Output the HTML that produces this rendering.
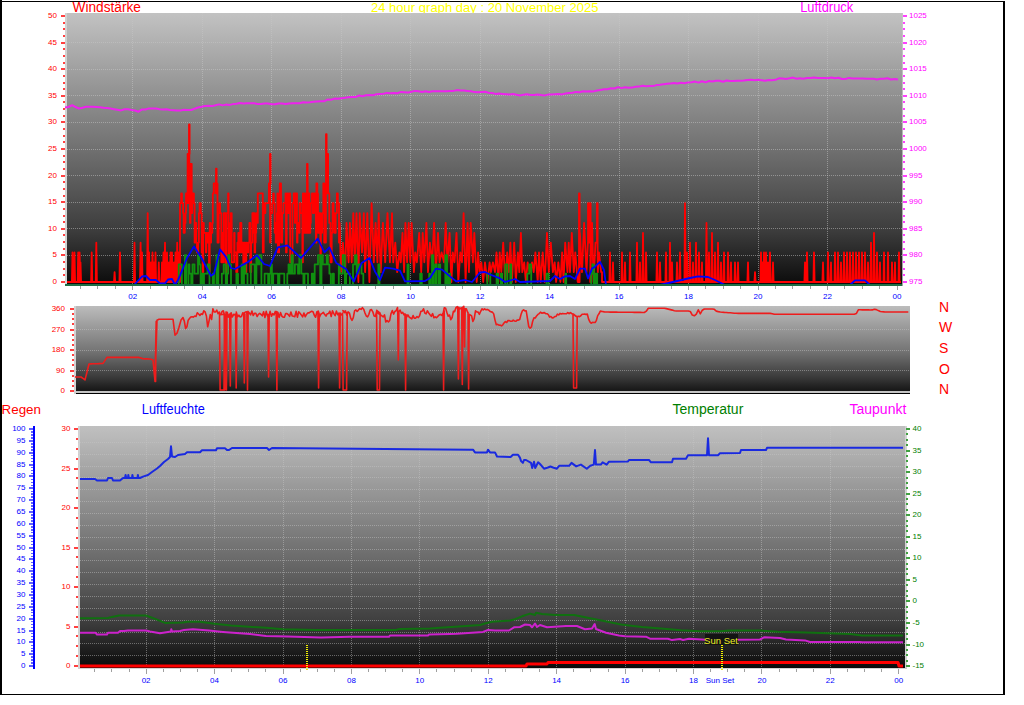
<!DOCTYPE html>
<html><head><meta charset="utf-8"><style>
html,body{margin:0;padding:0;background:#fff;width:1024px;height:705px;overflow:hidden}
svg{display:block}
text{font-family:"Liberation Sans", sans-serif}
</style></head><body>
<svg width="1024" height="705" viewBox="0 0 1024 705" shape-rendering="crispEdges">
<rect x="0" y="0" width="1024" height="705" fill="#fff"/>
<defs>
<linearGradient id="g1" x1="0" y1="0" x2="0" y2="1">
 <stop offset="0" stop-color="#c2c2c2"/><stop offset="0.5" stop-color="#707070"/><stop offset="0.8" stop-color="#3c3c3c"/><stop offset="1" stop-color="#0a0a0a"/>
</linearGradient>
<linearGradient id="g2" x1="0" y1="0" x2="0" y2="1">
 <stop offset="0" stop-color="#bcbcbc"/><stop offset="0.5" stop-color="#767676"/><stop offset="0.8" stop-color="#3c3c3c"/><stop offset="1" stop-color="#0e0e0e"/>
</linearGradient>
<linearGradient id="g3" x1="0" y1="0" x2="0" y2="1">
 <stop offset="0" stop-color="#c0c0c0"/><stop offset="0.5" stop-color="#737373"/><stop offset="0.8" stop-color="#404040"/><stop offset="1" stop-color="#0a0a0a"/>
</linearGradient>
<clipPath id="ctop"><rect x="0" y="13" width="1024" height="300"/></clipPath>
<clipPath id="cmid"><rect x="0" y="306" width="1024" height="100"/></clipPath>
<clipPath id="cbot"><rect x="0" y="426" width="1024" height="260"/></clipPath>
</defs>
<rect x="0" y="1" width="1005" height="1" fill="#000"/>
<rect x="0" y="0" width="2" height="695" fill="#000"/>
<rect x="1003" y="1" width="2" height="694" fill="#000"/>
<rect x="0" y="694" width="1005" height="1" fill="#000"/>
<text x="72.5" y="12" fill="#ff0000" font-size="14" text-anchor="start" textLength="68.5" lengthAdjust="spacingAndGlyphs">Windstärke</text>
<text x="371" y="12" fill="#ffff00" font-size="13" text-anchor="start" textLength="227.5" lengthAdjust="spacingAndGlyphs">24 hour graph day : 20 November 2025</text>
<text x="800.2" y="12.3" fill="#ff00ff" font-size="14" text-anchor="start" textLength="53" lengthAdjust="spacingAndGlyphs">Luftdruck</text>
<text x="1.5" y="414" fill="#ff0000" font-size="13.5" text-anchor="start" textLength="39.5" lengthAdjust="spacingAndGlyphs">Regen</text>
<text x="141.8" y="414" fill="#0000ff" font-size="14" text-anchor="start" textLength="63" lengthAdjust="spacingAndGlyphs">Luftfeuchte</text>
<text x="672.5" y="414" fill="#008000" font-size="14" text-anchor="start" >Temperatur</text>
<text x="849.5" y="414" fill="#ff00ff" font-size="14" text-anchor="start" >Taupunkt</text>
<rect x="65" y="13" width="838" height="273" fill="url(#g1)"/>
<rect x="65" y="13" width="2" height="273" fill="#d2d2d2"/>
<line x1="65" y1="255.4" x2="903" y2="255.4" stroke="#c8c8c8" stroke-width="1" stroke-dasharray="1 1" opacity="0.5"/>
<line x1="65" y1="228.8" x2="903" y2="228.8" stroke="#c8c8c8" stroke-width="1" stroke-dasharray="1 1" opacity="0.5"/>
<line x1="65" y1="202.2" x2="903" y2="202.2" stroke="#c8c8c8" stroke-width="1" stroke-dasharray="1 1" opacity="0.5"/>
<line x1="65" y1="175.6" x2="903" y2="175.6" stroke="#c8c8c8" stroke-width="1" stroke-dasharray="1 1" opacity="0.5"/>
<line x1="65" y1="149.0" x2="903" y2="149.0" stroke="#c8c8c8" stroke-width="1" stroke-dasharray="1 1" opacity="0.5"/>
<line x1="65" y1="122.4" x2="903" y2="122.4" stroke="#c8c8c8" stroke-width="1" stroke-dasharray="1 1" opacity="0.5"/>
<line x1="65" y1="95.8" x2="903" y2="95.8" stroke="#c8c8c8" stroke-width="1" stroke-dasharray="1 1" opacity="0.5"/>
<line x1="65" y1="69.2" x2="903" y2="69.2" stroke="#c8c8c8" stroke-width="1" stroke-dasharray="1 1" opacity="0.5"/>
<line x1="65" y1="42.6" x2="903" y2="42.6" stroke="#c8c8c8" stroke-width="1" stroke-dasharray="1 1" opacity="0.5"/>
<line x1="132.7" y1="13" x2="132.7" y2="286" stroke="#c8c8c8" stroke-width="1" stroke-dasharray="1 1" opacity="0.5"/>
<line x1="202.2" y1="13" x2="202.2" y2="286" stroke="#c8c8c8" stroke-width="1" stroke-dasharray="1 1" opacity="0.5"/>
<line x1="271.6" y1="13" x2="271.6" y2="286" stroke="#c8c8c8" stroke-width="1" stroke-dasharray="1 1" opacity="0.5"/>
<line x1="341.1" y1="13" x2="341.1" y2="286" stroke="#c8c8c8" stroke-width="1" stroke-dasharray="1 1" opacity="0.5"/>
<line x1="410.6" y1="13" x2="410.6" y2="286" stroke="#c8c8c8" stroke-width="1" stroke-dasharray="1 1" opacity="0.5"/>
<line x1="480.1" y1="13" x2="480.1" y2="286" stroke="#c8c8c8" stroke-width="1" stroke-dasharray="1 1" opacity="0.5"/>
<line x1="549.6" y1="13" x2="549.6" y2="286" stroke="#c8c8c8" stroke-width="1" stroke-dasharray="1 1" opacity="0.5"/>
<line x1="619.0" y1="13" x2="619.0" y2="286" stroke="#c8c8c8" stroke-width="1" stroke-dasharray="1 1" opacity="0.5"/>
<line x1="688.5" y1="13" x2="688.5" y2="286" stroke="#c8c8c8" stroke-width="1" stroke-dasharray="1 1" opacity="0.5"/>
<line x1="758.0" y1="13" x2="758.0" y2="286" stroke="#c8c8c8" stroke-width="1" stroke-dasharray="1 1" opacity="0.5"/>
<line x1="827.5" y1="13" x2="827.5" y2="286" stroke="#c8c8c8" stroke-width="1" stroke-dasharray="1 1" opacity="0.5"/>
<rect x="61" y="281.0" width="4" height="2" fill="#ff4040"/>
<text x="57" y="284.0" fill="#ff0000" font-size="8" text-anchor="end" clip-path="url(#ctop)">0</text>
<rect x="903" y="281.0" width="4" height="2" fill="#ff40ff"/>
<text x="909" y="284.0" fill="#ff00ff" font-size="8" text-anchor="start" clip-path="url(#ctop)">975</text>
<rect x="63" y="274.4" width="2" height="2" fill="#ff4040"/>
<rect x="903" y="274.4" width="2" height="2" fill="#ff40ff"/>
<rect x="63" y="267.7" width="2" height="2" fill="#ff4040"/>
<rect x="903" y="267.7" width="2" height="2" fill="#ff40ff"/>
<rect x="63" y="261.1" width="2" height="2" fill="#ff4040"/>
<rect x="903" y="261.1" width="2" height="2" fill="#ff40ff"/>
<rect x="61" y="254.4" width="4" height="2" fill="#ff4040"/>
<text x="57" y="257.4" fill="#ff0000" font-size="8" text-anchor="end" clip-path="url(#ctop)">5</text>
<rect x="903" y="254.4" width="4" height="2" fill="#ff40ff"/>
<text x="909" y="257.4" fill="#ff00ff" font-size="8" text-anchor="start" clip-path="url(#ctop)">980</text>
<rect x="63" y="247.8" width="2" height="2" fill="#ff4040"/>
<rect x="903" y="247.8" width="2" height="2" fill="#ff40ff"/>
<rect x="63" y="241.1" width="2" height="2" fill="#ff4040"/>
<rect x="903" y="241.1" width="2" height="2" fill="#ff40ff"/>
<rect x="63" y="234.4" width="2" height="2" fill="#ff4040"/>
<rect x="903" y="234.4" width="2" height="2" fill="#ff40ff"/>
<rect x="61" y="227.8" width="4" height="2" fill="#ff4040"/>
<text x="57" y="230.8" fill="#ff0000" font-size="8" text-anchor="end" clip-path="url(#ctop)">10</text>
<rect x="903" y="227.8" width="4" height="2" fill="#ff40ff"/>
<text x="909" y="230.8" fill="#ff00ff" font-size="8" text-anchor="start" clip-path="url(#ctop)">985</text>
<rect x="63" y="221.2" width="2" height="2" fill="#ff4040"/>
<rect x="903" y="221.2" width="2" height="2" fill="#ff40ff"/>
<rect x="63" y="214.5" width="2" height="2" fill="#ff4040"/>
<rect x="903" y="214.5" width="2" height="2" fill="#ff40ff"/>
<rect x="63" y="207.8" width="2" height="2" fill="#ff4040"/>
<rect x="903" y="207.8" width="2" height="2" fill="#ff40ff"/>
<rect x="61" y="201.2" width="4" height="2" fill="#ff4040"/>
<text x="57" y="204.2" fill="#ff0000" font-size="8" text-anchor="end" clip-path="url(#ctop)">15</text>
<rect x="903" y="201.2" width="4" height="2" fill="#ff40ff"/>
<text x="909" y="204.2" fill="#ff00ff" font-size="8" text-anchor="start" clip-path="url(#ctop)">990</text>
<rect x="63" y="194.6" width="2" height="2" fill="#ff4040"/>
<rect x="903" y="194.6" width="2" height="2" fill="#ff40ff"/>
<rect x="63" y="187.9" width="2" height="2" fill="#ff4040"/>
<rect x="903" y="187.9" width="2" height="2" fill="#ff40ff"/>
<rect x="63" y="181.2" width="2" height="2" fill="#ff4040"/>
<rect x="903" y="181.2" width="2" height="2" fill="#ff40ff"/>
<rect x="61" y="174.6" width="4" height="2" fill="#ff4040"/>
<text x="57" y="177.6" fill="#ff0000" font-size="8" text-anchor="end" clip-path="url(#ctop)">20</text>
<rect x="903" y="174.6" width="4" height="2" fill="#ff40ff"/>
<text x="909" y="177.6" fill="#ff00ff" font-size="8" text-anchor="start" clip-path="url(#ctop)">995</text>
<rect x="63" y="167.9" width="2" height="2" fill="#ff4040"/>
<rect x="903" y="167.9" width="2" height="2" fill="#ff40ff"/>
<rect x="63" y="161.3" width="2" height="2" fill="#ff4040"/>
<rect x="903" y="161.3" width="2" height="2" fill="#ff40ff"/>
<rect x="63" y="154.6" width="2" height="2" fill="#ff4040"/>
<rect x="903" y="154.6" width="2" height="2" fill="#ff40ff"/>
<rect x="61" y="148.0" width="4" height="2" fill="#ff4040"/>
<text x="57" y="151.0" fill="#ff0000" font-size="8" text-anchor="end" clip-path="url(#ctop)">25</text>
<rect x="903" y="148.0" width="4" height="2" fill="#ff40ff"/>
<text x="909" y="151.0" fill="#ff00ff" font-size="8" text-anchor="start" clip-path="url(#ctop)">1000</text>
<rect x="63" y="141.3" width="2" height="2" fill="#ff4040"/>
<rect x="903" y="141.3" width="2" height="2" fill="#ff40ff"/>
<rect x="63" y="134.7" width="2" height="2" fill="#ff4040"/>
<rect x="903" y="134.7" width="2" height="2" fill="#ff40ff"/>
<rect x="63" y="128.0" width="2" height="2" fill="#ff4040"/>
<rect x="903" y="128.0" width="2" height="2" fill="#ff40ff"/>
<rect x="61" y="121.4" width="4" height="2" fill="#ff4040"/>
<text x="57" y="124.4" fill="#ff0000" font-size="8" text-anchor="end" clip-path="url(#ctop)">30</text>
<rect x="903" y="121.4" width="4" height="2" fill="#ff40ff"/>
<text x="909" y="124.4" fill="#ff00ff" font-size="8" text-anchor="start" clip-path="url(#ctop)">1005</text>
<rect x="63" y="114.8" width="2" height="2" fill="#ff4040"/>
<rect x="903" y="114.8" width="2" height="2" fill="#ff40ff"/>
<rect x="63" y="108.1" width="2" height="2" fill="#ff4040"/>
<rect x="903" y="108.1" width="2" height="2" fill="#ff40ff"/>
<rect x="63" y="101.4" width="2" height="2" fill="#ff4040"/>
<rect x="903" y="101.4" width="2" height="2" fill="#ff40ff"/>
<rect x="61" y="94.8" width="4" height="2" fill="#ff4040"/>
<text x="57" y="97.8" fill="#ff0000" font-size="8" text-anchor="end" clip-path="url(#ctop)">35</text>
<rect x="903" y="94.8" width="4" height="2" fill="#ff40ff"/>
<text x="909" y="97.8" fill="#ff00ff" font-size="8" text-anchor="start" clip-path="url(#ctop)">1010</text>
<rect x="63" y="88.1" width="2" height="2" fill="#ff4040"/>
<rect x="903" y="88.1" width="2" height="2" fill="#ff40ff"/>
<rect x="63" y="81.5" width="2" height="2" fill="#ff4040"/>
<rect x="903" y="81.5" width="2" height="2" fill="#ff40ff"/>
<rect x="63" y="74.8" width="2" height="2" fill="#ff4040"/>
<rect x="903" y="74.8" width="2" height="2" fill="#ff40ff"/>
<rect x="61" y="68.2" width="4" height="2" fill="#ff4040"/>
<text x="57" y="71.2" fill="#ff0000" font-size="8" text-anchor="end" clip-path="url(#ctop)">40</text>
<rect x="903" y="68.2" width="4" height="2" fill="#ff40ff"/>
<text x="909" y="71.2" fill="#ff00ff" font-size="8" text-anchor="start" clip-path="url(#ctop)">1015</text>
<rect x="63" y="61.5" width="2" height="2" fill="#ff4040"/>
<rect x="903" y="61.5" width="2" height="2" fill="#ff40ff"/>
<rect x="63" y="54.9" width="2" height="2" fill="#ff4040"/>
<rect x="903" y="54.9" width="2" height="2" fill="#ff40ff"/>
<rect x="63" y="48.2" width="2" height="2" fill="#ff4040"/>
<rect x="903" y="48.2" width="2" height="2" fill="#ff40ff"/>
<rect x="61" y="41.6" width="4" height="2" fill="#ff4040"/>
<text x="57" y="44.6" fill="#ff0000" font-size="8" text-anchor="end" clip-path="url(#ctop)">45</text>
<rect x="903" y="41.6" width="4" height="2" fill="#ff40ff"/>
<text x="909" y="44.6" fill="#ff00ff" font-size="8" text-anchor="start" clip-path="url(#ctop)">1020</text>
<rect x="63" y="34.9" width="2" height="2" fill="#ff4040"/>
<rect x="903" y="34.9" width="2" height="2" fill="#ff40ff"/>
<rect x="63" y="28.3" width="2" height="2" fill="#ff4040"/>
<rect x="903" y="28.3" width="2" height="2" fill="#ff40ff"/>
<rect x="63" y="21.6" width="2" height="2" fill="#ff4040"/>
<rect x="903" y="21.6" width="2" height="2" fill="#ff40ff"/>
<rect x="61" y="15.0" width="4" height="2" fill="#ff4040"/>
<text x="57" y="18.0" fill="#ff0000" font-size="8" text-anchor="end" clip-path="url(#ctop)">50</text>
<rect x="903" y="15.0" width="4" height="2" fill="#ff40ff"/>
<text x="909" y="18.0" fill="#ff00ff" font-size="8" text-anchor="start" clip-path="url(#ctop)">1025</text>
<rect x="80.1" y="286" width="1" height="3" fill="#a0a0a0"/>
<rect x="97.4" y="286" width="1" height="3" fill="#a0a0a0"/>
<rect x="114.8" y="286" width="1" height="3" fill="#a0a0a0"/>
<rect x="132.2" y="286" width="1" height="4" fill="#a0a0a0"/>
<rect x="149.6" y="286" width="1" height="3" fill="#a0a0a0"/>
<rect x="166.9" y="286" width="1" height="3" fill="#a0a0a0"/>
<rect x="184.3" y="286" width="1" height="3" fill="#a0a0a0"/>
<rect x="201.7" y="286" width="1" height="4" fill="#a0a0a0"/>
<rect x="219.0" y="286" width="1" height="3" fill="#a0a0a0"/>
<rect x="236.4" y="286" width="1" height="3" fill="#a0a0a0"/>
<rect x="253.8" y="286" width="1" height="3" fill="#a0a0a0"/>
<rect x="271.1" y="286" width="1" height="4" fill="#a0a0a0"/>
<rect x="288.5" y="286" width="1" height="3" fill="#a0a0a0"/>
<rect x="305.9" y="286" width="1" height="3" fill="#a0a0a0"/>
<rect x="323.2" y="286" width="1" height="3" fill="#a0a0a0"/>
<rect x="340.6" y="286" width="1" height="4" fill="#a0a0a0"/>
<rect x="358.0" y="286" width="1" height="3" fill="#a0a0a0"/>
<rect x="375.4" y="286" width="1" height="3" fill="#a0a0a0"/>
<rect x="392.7" y="286" width="1" height="3" fill="#a0a0a0"/>
<rect x="410.1" y="286" width="1" height="4" fill="#a0a0a0"/>
<rect x="427.5" y="286" width="1" height="3" fill="#a0a0a0"/>
<rect x="444.8" y="286" width="1" height="3" fill="#a0a0a0"/>
<rect x="462.2" y="286" width="1" height="3" fill="#a0a0a0"/>
<rect x="479.6" y="286" width="1" height="4" fill="#a0a0a0"/>
<rect x="496.9" y="286" width="1" height="3" fill="#a0a0a0"/>
<rect x="514.3" y="286" width="1" height="3" fill="#a0a0a0"/>
<rect x="531.7" y="286" width="1" height="3" fill="#a0a0a0"/>
<rect x="549.1" y="286" width="1" height="4" fill="#a0a0a0"/>
<rect x="566.4" y="286" width="1" height="3" fill="#a0a0a0"/>
<rect x="583.8" y="286" width="1" height="3" fill="#a0a0a0"/>
<rect x="601.2" y="286" width="1" height="3" fill="#a0a0a0"/>
<rect x="618.5" y="286" width="1" height="4" fill="#a0a0a0"/>
<rect x="635.9" y="286" width="1" height="3" fill="#a0a0a0"/>
<rect x="653.3" y="286" width="1" height="3" fill="#a0a0a0"/>
<rect x="670.7" y="286" width="1" height="3" fill="#a0a0a0"/>
<rect x="688.0" y="286" width="1" height="4" fill="#a0a0a0"/>
<rect x="705.4" y="286" width="1" height="3" fill="#a0a0a0"/>
<rect x="722.8" y="286" width="1" height="3" fill="#a0a0a0"/>
<rect x="740.1" y="286" width="1" height="3" fill="#a0a0a0"/>
<rect x="757.5" y="286" width="1" height="4" fill="#a0a0a0"/>
<rect x="774.9" y="286" width="1" height="3" fill="#a0a0a0"/>
<rect x="792.2" y="286" width="1" height="3" fill="#a0a0a0"/>
<rect x="809.6" y="286" width="1" height="3" fill="#a0a0a0"/>
<rect x="827.0" y="286" width="1" height="4" fill="#a0a0a0"/>
<rect x="844.4" y="286" width="1" height="3" fill="#a0a0a0"/>
<rect x="861.7" y="286" width="1" height="3" fill="#a0a0a0"/>
<rect x="879.1" y="286" width="1" height="3" fill="#a0a0a0"/>
<rect x="896.5" y="286" width="1" height="4" fill="#a0a0a0"/>
<text x="132.7" y="299" fill="#0000ff" font-size="8" text-anchor="middle" >02</text>
<text x="202.2" y="299" fill="#0000ff" font-size="8" text-anchor="middle" >04</text>
<text x="271.6" y="299" fill="#0000ff" font-size="8" text-anchor="middle" >06</text>
<text x="341.1" y="299" fill="#0000ff" font-size="8" text-anchor="middle" >08</text>
<text x="410.6" y="299" fill="#0000ff" font-size="8" text-anchor="middle" >10</text>
<text x="480.1" y="299" fill="#0000ff" font-size="8" text-anchor="middle" >12</text>
<text x="549.6" y="299" fill="#0000ff" font-size="8" text-anchor="middle" >14</text>
<text x="619.0" y="299" fill="#0000ff" font-size="8" text-anchor="middle" >16</text>
<text x="688.5" y="299" fill="#0000ff" font-size="8" text-anchor="middle" >18</text>
<text x="758.0" y="299" fill="#0000ff" font-size="8" text-anchor="middle" >20</text>
<text x="827.5" y="299" fill="#0000ff" font-size="8" text-anchor="middle" >22</text>
<text x="897.0" y="299" fill="#0000ff" font-size="8" text-anchor="middle" >00</text>
<path d="M67.0,282.0 L71.9,282.0 L72.5,252.4 L73.1,282.0 L72.9,282.0 L73.5,262.3 L74.1,282.0 L73.9,282.0 L74.5,252.4 L75.1,282.0 L77.6,282.0 L78.2,252.4 L78.8,282.0 L79.0,282.0 L79.6,252.4 L80.2,282.0 L79.9,282.0 L80.5,262.3 L81.1,282.0 L91.1,282.0 L91.7,252.4 L92.3,282.0 L95.7,282.0 L96.3,242.6 L96.9,282.0 L114.0,282.0 L114.6,272.1 L115.2,282.0 L119.4,282.0 L120.0,252.4 L120.6,282.0 L133.9,282.0 L134.5,242.6 L135.1,282.0 L140.0,282.0 L140.6,242.6 L141.2,282.0 L141.4,282.0 L142.0,252.4 L142.6,282.0 L147.1,282.0 L147.7,213.1 L148.3,282.0 L148.5,282.0 L149.1,252.4 L149.7,282.0 L150.4,282.0 L151.0,262.3 L151.6,282.0 L151.9,282.0 L152.5,252.4 L153.1,282.0 L153.4,282.0 L154.0,262.3 L154.6,282.0 L154.9,282.0 L155.5,252.4 L156.1,282.0 L158.2,282.0 L158.8,262.3 L159.4,282.0 L161.4,282.0 L162.0,262.3 L162.6,282.0 L162.9,282.0 L163.5,252.4 L164.1,282.0 L164.4,282.0 L165.0,242.6 L165.6,282.0 L166.4,282.0 L167.0,252.4 L167.6,282.0 L168.4,282.0 L169.0,262.3 L169.6,282.0 L169.9,282.0 L170.5,252.4 L171.1,282.0 L171.4,282.0 L172.0,252.4 L172.6,282.0 L173.4,282.0 L174.0,262.3 L174.6,282.0 L174.9,282.0 L175.5,252.4 L176.1,282.0 L176.6,282.0 L177.2,242.6 L177.8,282.0 L177.9,282.0 L178.5,252.4 L179.1,282.0 L180.0,282.0 L180.0,282.0 L180.0,203.2 L181.2,203.2 L181.2,193.4 L181.9,193.4 L181.9,203.2 L182.6,203.2 L182.6,203.2 L183.1,203.2 L183.1,213.1 L183.6,213.1 L183.6,232.8 L184.8,232.8 L184.8,222.9 L185.5,222.9 L185.5,213.1 L186.0,213.1 L186.0,193.4 L186.7,193.4 L186.7,203.2 L187.6,203.2 L187.6,154.0 L188.3,154.0 L188.3,203.2 L188.8,203.2 L188.8,154.0 L189.0,154.0 L189.0,124.4 L189.6,124.4 L189.6,154.0 L189.3,154.0 L189.3,203.2 L190.0,203.2 L190.0,222.9 L190.5,222.9 L190.5,163.8 L191.7,163.8 L191.7,213.1 L192.2,213.1 L192.2,193.4 L192.7,193.4 L192.7,193.4 L193.9,193.4 L193.9,203.2 L194.6,203.2 L194.6,242.6 L195.1,242.6 L195.1,222.9 L196.3,222.9 L196.3,242.6 L197.0,242.6 L197.0,252.4 L198.2,252.4 L198.2,242.6 L198.9,242.6 L198.9,213.1 L199.6,213.1 L199.6,203.2 L200.8,203.2 L200.8,213.1 L201.7,213.1 L201.7,252.4 L202.6,252.4 L202.6,272.1 L203.3,272.1 L203.3,222.9 L203.8,222.9 L203.8,232.8 L205.0,232.8 L205.0,232.8 L205.9,232.8 L205.9,252.4 L206.4,252.4 L206.4,232.8 L207.1,232.8 L207.1,242.6 L208.3,242.6 L208.3,232.8 L209.0,232.8 L209.0,272.1 L209.7,272.1 L209.7,222.9 L210.4,222.9 L210.4,242.6 L211.1,242.6 L211.1,232.8 L212.3,232.8 L212.3,222.9 L212.8,222.9 L212.8,193.4 L213.7,193.4 L213.7,183.5 L214.6,183.5 L214.6,183.5 L215.8,183.5 L215.8,193.4 L216.0,193.4 L216.0,168.7 L216.6,168.7 L216.6,193.4 L216.3,193.4 L216.3,193.4 L216.8,193.4 L216.8,183.5 L217.5,183.5 L217.5,242.6 L218.7,242.6 L218.7,213.1 L219.4,213.1 L219.4,203.2 L220.1,203.2 L220.1,213.1 L221.3,213.1 L221.3,262.3 L222.0,262.3 L222.0,232.8 L223.2,232.8 L223.2,262.3 L223.7,262.3 L223.7,213.1 L224.9,213.1 L224.9,213.1 L225.6,213.1 L225.6,272.1 L226.5,272.1 L226.5,213.1 L227.2,213.1 L227.2,213.1 L228.1,213.1 L228.1,193.4 L228.6,193.4 L228.6,262.3 L229.1,262.3 L229.1,252.4 L230.3,252.4 L230.3,222.9 L230.8,222.9 L230.8,213.1 L231.7,213.1 L231.7,262.3 L232.9,262.3 L232.9,262.3 L234.1,262.3 L234.1,232.8 L234.6,232.8 L234.6,252.4 L235.5,252.4 L235.5,252.4 L236.2,252.4 L236.2,272.1 L237.4,272.1 L237.4,242.6 L238.3,242.6 L238.3,232.8 L239.0,232.8 L239.0,252.4 L240.2,252.4 L240.2,222.9 L241.4,222.9 L241.4,252.4 L242.6,252.4 L242.6,242.6 L243.3,242.6 L243.3,272.1 L244.2,272.1 L244.2,242.6 L245.1,242.6 L245.1,252.4 L245.6,252.4 L245.6,272.1 L246.3,272.1 L246.3,242.6 L247.0,242.6 L247.0,252.4 L248.2,252.4 L248.2,242.6 L249.4,242.6 L249.4,222.9 L250.3,222.9 L250.3,272.1 L251.2,272.1 L251.2,242.6 L251.7,242.6 L251.7,242.6 L252.4,242.6 L252.4,213.1 L253.1,213.1 L253.1,232.8 L253.6,232.8 L253.6,213.1 L254.5,213.1 L254.5,252.4 L255.2,252.4 L255.2,242.6 L255.7,242.6 L255.7,232.8 L256.2,232.8 L256.2,213.1 L257.1,213.1 L257.1,222.9 L257.8,222.9 L257.8,193.4 L258.5,193.4 L258.5,193.4 L259.7,193.4 L259.7,193.4 L260.2,193.4 L260.2,193.4 L261.1,193.4 L261.1,193.4 L261.8,193.4 L261.8,193.4 L262.3,193.4 L262.3,193.4 L262.8,193.4 L262.8,252.4 L263.7,252.4 L263.7,203.2 L264.2,203.2 L264.2,213.1 L265.4,213.1 L265.4,203.2 L266.3,203.2 L266.3,203.2 L266.8,203.2 L266.8,203.2 L267.7,203.2 L267.7,203.2 L268.9,203.2 L268.9,183.5 L270.0,183.5 L270.0,154.0 L270.6,154.0 L270.6,183.5 L270.1,183.5 L270.1,242.6 L270.6,242.6 L270.6,213.1 L271.5,213.1 L271.5,213.1 L272.2,213.1 L272.2,203.2 L273.1,203.2 L273.1,193.4 L273.8,193.4 L273.8,203.2 L274.7,203.2 L274.7,232.8 L275.2,232.8 L275.2,222.9 L275.7,222.9 L275.7,242.6 L276.9,242.6 L276.9,213.1 L277.4,213.1 L277.4,193.4 L277.9,193.4 L277.9,252.4 L279.1,252.4 L279.1,193.4 L279.8,193.4 L279.8,183.5 L281.0,183.5 L281.0,242.6 L282.2,242.6 L282.2,213.1 L282.9,213.1 L282.9,213.1 L283.4,213.1 L283.4,203.2 L284.3,203.2 L284.3,203.2 L285.5,203.2 L285.5,193.4 L286.0,193.4 L286.0,252.4 L286.7,252.4 L286.7,213.1 L287.2,213.1 L287.2,193.4 L287.9,193.4 L287.9,213.1 L288.6,213.1 L288.6,213.1 L289.3,213.1 L289.3,193.4 L290.2,193.4 L290.2,262.3 L291.1,262.3 L291.1,262.3 L291.8,262.3 L291.8,262.3 L292.5,262.3 L292.5,203.2 L293.7,203.2 L293.7,193.4 L294.9,193.4 L294.9,222.9 L295.6,222.9 L295.6,193.4 L296.1,193.4 L296.1,193.4 L297.0,193.4 L297.0,242.6 L297.5,242.6 L297.5,222.9 L298.4,222.9 L298.4,222.9 L299.1,222.9 L299.1,232.8 L299.6,232.8 L299.6,203.2 L300.8,203.2 L300.8,213.1 L301.5,213.1 L301.5,213.1 L302.4,213.1 L302.4,262.3 L302.9,262.3 L302.9,193.4 L303.4,193.4 L303.4,232.8 L304.6,232.8 L304.6,193.4 L305.3,193.4 L305.3,232.8 L305.8,232.8 L305.8,232.8 L307.0,232.8 L307.0,183.5 L307.0,183.5 L307.0,163.8 L307.6,163.8 L307.6,183.5 L307.7,183.5 L307.7,232.8 L308.2,232.8 L308.2,193.4 L309.4,193.4 L309.4,232.8 L310.3,232.8 L310.3,222.9 L310.8,222.9 L310.8,203.2 L312.0,203.2 L312.0,193.4 L312.9,193.4 L312.9,213.1 L314.1,213.1 L314.1,193.4 L315.0,193.4 L315.0,203.2 L315.9,203.2 L315.9,242.6 L316.4,242.6 L316.4,183.5 L317.3,183.5 L317.3,193.4 L318.0,193.4 L318.0,232.8 L319.2,232.8 L319.2,213.1 L320.4,213.1 L320.4,262.3 L320.9,262.3 L320.9,232.8 L322.1,232.8 L322.1,213.1 L323.3,213.1 L323.3,183.5 L324.2,183.5 L324.2,242.6 L325.4,242.6 L325.4,242.6 L325.9,242.6 L325.9,183.5 L326.0,183.5 L326.0,134.2 L326.6,134.2 L326.6,183.5 L326.4,183.5 L326.4,193.4 L326.9,193.4 L326.9,154.0 L328.1,154.0 L328.1,193.4 L329.3,193.4 L329.3,222.9 L330.5,222.9 L330.5,262.3 L331.7,262.3 L331.7,232.8 L332.6,232.8 L332.6,203.2 L333.5,203.2 L333.5,222.9 L334.0,222.9 L334.0,213.1 L334.5,213.1 L334.5,232.8 L335.7,232.8 L335.7,213.1 L336.9,213.1 L336.9,193.4 L337.8,193.4 L337.8,203.2 L339.0,203.2 L339.0,242.6 L339.7,242.6 L339.7,222.9 L340.9,272.1 L342.9,242.6 L345.2,272.1 L346.5,222.9 L348.6,262.3 L349.9,222.9 L351.7,262.3 L353.3,213.1 L354.7,262.3 L356.5,213.1 L358.4,282.0 L359.7,213.1 L362.0,252.4 L363.8,213.1 L365.1,272.1 L367.3,213.1 L369.4,282.0 L371.6,203.2 L373.8,262.3 L375.6,222.9 L377.4,262.3 L378.7,213.1 L380.7,272.1 L382.9,222.9 L385.2,262.3 L387.5,213.1 L389.9,262.3 L392.0,213.1 L393.2,262.3 L395.3,242.6 L397.2,272.1 L399.4,252.4 L400.8,262.3 L402.5,232.8 L404.1,272.1 L405.4,222.9 L407.1,262.3 L408.7,222.9 L410.3,262.3 L411.6,222.9 L413.9,272.1 L415.3,252.4 L416.9,262.3 L419.2,232.8 L421.2,272.1 L422.7,232.8 L424.3,262.3 L426.4,222.9 L428.0,272.1 L429.9,242.6 L432.2,262.3 L434.1,222.9 L435.9,272.1 L438.0,232.8 L439.5,262.3 L441.6,252.4 L444.0,262.3 L445.7,222.9 L447.4,262.3 L449.6,232.8 L451.4,282.0 L452.8,252.4 L454.5,262.3 L456.5,232.8 L458.3,282.0 L460.3,252.4 L462.0,262.3 L463.6,213.1 L465.6,282.0 L467.6,222.9 L468.9,272.1 L470.7,222.9 L472.9,262.3 L474.3,232.8 L476.7,282.0 L478.1,252.4 L479.6,272.1 L481.3,262.3 L483.2,282.0 L485.0,262.3 L487.4,282.0 L489.6,262.3 L490.9,272.1 L492.9,262.3 L495.0,272.1 L496.5,252.4 L498.4,282.0 L499.7,252.4 L501.3,272.1 L503.2,242.6 L505.2,282.0 L507.2,252.4 L508.9,272.1 L510.4,242.6 L511.9,282.0 L514.2,242.6 L515.8,282.0 L517.9,252.4 L519.3,272.1 L520.9,232.8 L522.3,272.1 L524.2,262.3 L525.9,282.0 L527.6,262.3 L529.9,272.1 L532.1,262.3 L533.7,272.1 L535.4,252.4 L537.7,282.0 L539.0,252.4 L540.7,282.0 L542.7,252.4 L544.8,282.0 L547.0,232.8 L548.8,272.1 L550.8,242.6 L552.9,272.1 L554.7,262.3 L556.1,282.0 L558.3,262.3 L560.4,282.0 L562.1,252.4 L563.6,282.0 L565.2,242.6 L567.5,272.1 L568.7,242.6 L570.0,272.1 L571.8,232.8 L573.8,272.1 L575.3,252.4 L577.7,282.0 L579.0,282.0 L579.0,193.4 L579.6,193.4 L579.6,282.0 L579.9,232.8 L582.0,272.1 L584.1,222.9 L586.5,272.1 L587.9,242.6 L588.0,242.6 L588.0,203.2 L588.6,203.2 L588.6,242.6 L590.0,242.6 L590.0,203.2 L590.6,203.2 L590.6,242.6 L590.2,282.0 L592.1,222.9 L593.5,282.0 L595.5,242.6 L597.0,242.6 L597.0,203.2 L597.6,203.2 L597.6,242.6 L597.8,272.1 L599.0,252.4 L601.1,272.1 L602.0,272.1 L602.0,282.0 L609.4,282.0 L610.0,252.4 L610.6,282.0 L612.4,282.0 L613.0,262.3 L613.6,282.0 L621.4,282.0 L622.0,252.4 L622.6,282.0 L624.4,282.0 L625.0,262.3 L625.6,282.0 L629.4,282.0 L630.0,252.4 L630.6,282.0 L636.4,282.0 L637.0,242.6 L637.6,282.0 L639.4,282.0 L640.0,262.3 L640.6,282.0 L642.4,282.0 L643.0,232.8 L643.6,282.0 L645.4,282.0 L646.0,252.4 L646.6,282.0 L656.4,282.0 L657.0,252.4 L657.6,282.0 L659.4,282.0 L660.0,262.3 L660.6,282.0 L665.4,282.0 L666.0,252.4 L666.6,282.0 L669.4,282.0 L670.0,242.6 L670.6,282.0 L671.4,282.0 L672.0,262.3 L672.6,282.0 L676.4,282.0 L677.0,262.3 L677.6,282.0 L679.4,282.0 L680.0,252.4 L680.6,282.0 L684.4,282.0 L685.0,203.2 L685.6,282.0 L686.4,282.0 L687.0,252.4 L687.6,282.0 L689.4,282.0 L690.0,242.6 L690.6,282.0 L692.4,282.0 L693.0,262.3 L693.6,282.0 L695.4,282.0 L696.0,242.6 L696.6,282.0 L698.4,282.0 L699.0,252.4 L699.6,282.0 L701.4,282.0 L702.0,262.3 L702.6,282.0 L705.9,282.0 L706.5,222.9 L707.1,282.0 L708.4,282.0 L709.0,252.4 L709.6,282.0 L711.4,282.0 L712.0,232.8 L712.6,282.0 L714.4,282.0 L715.0,252.4 L715.6,282.0 L717.4,282.0 L718.0,242.6 L718.6,282.0 L720.4,282.0 L721.0,262.3 L721.6,282.0 L723.4,282.0 L724.0,252.4 L724.6,282.0 L727.4,282.0 L728.0,252.4 L728.6,282.0 L730.4,282.0 L731.0,262.3 L731.6,282.0 L734.4,282.0 L735.0,262.3 L735.6,282.0 L737.4,282.0 L738.0,262.3 L738.6,282.0 L747.4,282.0 L748.0,262.3 L748.6,282.0 L754.4,282.0 L755.0,272.1 L755.6,282.0 L760.4,282.0 L761.0,252.4 L761.6,282.0 L761.9,282.0 L762.5,262.3 L763.1,282.0 L763.4,282.0 L764.0,252.4 L764.6,282.0 L765.4,282.0 L766.0,252.4 L766.6,282.0 L767.4,282.0 L768.0,262.3 L768.6,282.0 L769.4,282.0 L770.0,252.4 L770.6,282.0 L772.4,282.0 L773.0,262.3 L773.6,282.0 L804.4,282.0 L805.0,262.3 L805.6,282.0 L806.4,282.0 L807.0,252.4 L807.6,282.0 L813.4,282.0 L814.0,252.4 L814.6,282.0 L822.4,282.0 L823.0,262.3 L823.6,282.0 L827.4,282.0 L828.0,252.4 L828.6,282.0 L830.4,282.0 L831.0,262.3 L831.6,282.0 L834.4,282.0 L835.0,252.4 L835.6,282.0 L837.4,282.0 L838.0,252.4 L838.6,282.0 L840.4,282.0 L841.0,262.3 L841.6,282.0 L843.4,282.0 L844.0,252.4 L844.6,282.0 L846.4,282.0 L847.0,252.4 L847.6,282.0 L849.4,282.0 L850.0,252.4 L850.6,282.0 L852.4,282.0 L853.0,252.4 L853.6,282.0 L855.4,282.0 L856.0,252.4 L856.6,282.0 L858.4,282.0 L859.0,252.4 L859.6,282.0 L861.4,282.0 L862.0,252.4 L862.6,282.0 L864.4,282.0 L865.0,252.4 L865.6,282.0 L867.4,282.0 L868.0,262.3 L868.6,282.0 L870.4,282.0 L871.0,242.6 L871.6,282.0 L873.4,282.0 L874.0,232.8 L874.6,282.0 L876.4,282.0 L877.0,252.4 L877.6,282.0 L879.4,282.0 L880.0,262.3 L880.6,282.0 L883.4,282.0 L884.0,252.4 L884.6,282.0 L887.4,282.0 L888.0,252.4 L888.6,282.0 L891.4,282.0 L892.0,262.3 L892.6,282.0 L894.4,282.0 L895.0,262.3 L895.6,282.0 L898.4,282.0 L899.0,252.4 L899.6,282.0 L901.0,282.0" fill="none" stroke="#ff0000" stroke-width="1.8" stroke-linejoin="round" shape-rendering="geometricPrecision" />
<path d="M65.0,285.0 L66.3,285.0 L66.3,285.0 L68.3,285.0 L68.3,285.0 L70.0,285.0 L70.0,285.0 L72.2,285.0 L72.2,285.0 L74.0,285.0 L74.0,285.0 L75.6,285.0 L75.6,285.0 L77.3,285.0 L77.3,285.0 L79.2,285.0 L79.2,285.0 L80.2,285.0 L80.2,285.0 L81.7,285.0 L81.7,285.0 L83.5,285.0 L83.5,285.0 L85.1,285.0 L85.1,285.0 L86.3,285.0 L86.3,285.0 L88.1,285.0 L88.1,285.0 L90.0,285.0 L90.0,285.0 L91.2,285.0 L91.2,285.0 L92.8,285.0 L92.8,285.0 L94.8,285.0 L94.8,285.0 L96.5,285.0 L96.5,285.0 L97.8,285.0 L97.8,285.0 L98.9,285.0 L98.9,285.0 L101.1,285.0 L101.1,285.0 L102.1,285.0 L102.1,285.0 L103.5,285.0 L103.5,285.0 L105.6,285.0 L105.6,285.0 L106.9,285.0 L106.9,285.0 L108.6,285.0 L108.6,285.0 L110.3,285.0 L110.3,285.0 L112.2,285.0 L112.2,285.0 L113.8,285.0 L113.8,285.0 L115.6,285.0 L115.6,285.0 L117.6,285.0 L117.6,285.0 L118.6,285.0 L118.6,285.0 L119.6,285.0 L119.6,285.0 L120.8,285.0 L120.8,285.0 L122.5,285.0 L122.5,285.0 L124.2,285.0 L124.2,285.0 L126.0,285.0 L126.0,285.0 L127.7,285.0 L127.7,285.0 L128.7,285.0 L128.7,285.0 L130.1,285.0 L130.1,285.0 L131.9,285.0 L131.9,285.0 L133.9,285.0 L133.9,285.0 L135.8,285.0 L135.8,285.0 L137.7,285.0 L137.7,285.0 L139.6,285.0 L139.6,285.0 L141.1,285.0 L141.1,285.0 L142.9,285.0 L142.9,285.0 L144.4,285.0 L144.4,285.0 L145.8,285.0 L145.8,285.0 L147.0,285.0 L147.0,285.0 L148.6,285.0 L148.6,285.0 L150.3,285.0 L150.3,285.0 L152.0,285.0 L152.0,285.0 L153.5,285.0 L153.5,285.0 L154.8,285.0 L154.8,285.0 L156.3,285.0 L156.3,285.0 L158.1,285.0 L158.1,285.0 L159.9,285.0 L159.9,285.0 L162.1,285.0 L162.1,285.0 L163.6,285.0 L163.6,285.0 L165.8,285.0 L165.8,285.0 L167.7,285.0 L167.7,285.0 L169.5,285.0 L169.5,285.0 L170.4,285.0 L170.4,285.0 L172.5,285.0 L172.5,285.0 L173.5,285.0 L173.5,285.0 L174.8,285.0 L174.8,285.0 L176.9,285.0 L176.9,285.0 L178.7,285.0 L178.7,264.4 L180.6,264.4 L180.6,264.4 L181.8,264.4 L181.8,285.0 L183.4,285.0 L183.4,285.0 L184.9,285.0 L184.9,255.1 L186.3,255.1 L186.3,285.0 L188.5,285.0 L188.5,264.4 L189.4,264.4 L189.4,273.7 L191.2,273.7 L191.2,285.0 L192.5,285.0 L192.5,264.4 L194.5,264.4 L194.5,273.7 L196.6,273.7 L196.6,273.7 L198.0,273.7 L198.0,255.1 L199.4,255.1 L199.4,264.4 L200.6,264.4 L200.6,285.0 L201.7,285.0 L201.7,273.7 L202.8,273.7 L202.8,285.0 L204.0,285.0 L204.0,273.7 L205.3,273.7 L205.3,273.7 L207.5,273.7 L207.5,264.4 L209.5,264.4 L209.5,285.0 L210.9,285.0 L210.9,285.0 L212.7,285.0 L212.7,273.7 L214.0,273.7 L214.0,285.0 L215.1,285.0 L215.1,285.0 L216.5,285.0 L216.5,255.1 L218.3,255.1 L218.3,285.0 L219.7,285.0 L219.7,285.0 L221.8,285.0 L221.8,273.7 L223.7,273.7 L223.7,264.4 L225.8,264.4 L225.8,285.0 L227.1,285.0 L227.1,273.7 L228.1,273.7 L228.1,255.1 L229.5,255.1 L229.5,264.4 L231.0,264.4 L231.0,285.0 L232.4,285.0 L232.4,285.0 L233.4,285.0 L233.4,285.0 L235.1,285.0 L235.1,285.0 L236.4,285.0 L236.4,273.7 L238.0,273.7 L238.0,285.0 L239.8,285.0 L239.8,285.0 L241.6,285.0 L241.6,264.4 L242.7,264.4 L242.7,285.0 L244.0,285.0 L244.0,264.4 L245.4,264.4 L245.4,273.7 L247.5,273.7 L247.5,285.0 L248.7,285.0 L248.7,285.0 L249.9,285.0 L249.9,285.0 L250.8,285.0 L250.8,264.4 L252.5,264.4 L252.5,264.4 L254.7,264.4 L254.7,285.0 L256.4,285.0 L256.4,255.1 L257.6,255.1 L257.6,264.4 L259.4,264.4 L259.4,255.1 L261.4,255.1 L261.4,285.0 L263.1,285.0 L263.1,285.0 L264.6,285.0 L264.6,273.7 L265.6,273.7 L265.6,273.7 L266.9,273.7 L266.9,273.7 L268.1,273.7 L268.1,285.0 L269.6,285.0 L269.6,273.7 L270.7,273.7 L270.7,264.4 L271.9,264.4 L271.9,285.0 L273.2,285.0 L273.2,273.7 L274.3,273.7 L274.3,273.7 L276.2,273.7 L276.2,273.7 L278.0,273.7 L278.0,285.0 L279.4,285.0 L279.4,273.7 L280.4,273.7 L280.4,273.7 L281.3,273.7 L281.3,273.7 L283.0,273.7 L283.0,273.7 L284.3,273.7 L284.3,285.0 L285.2,285.0 L285.2,285.0 L287.3,285.0 L287.3,273.7 L288.5,273.7 L288.5,264.4 L289.7,264.4 L289.7,273.7 L291.4,273.7 L291.4,255.1 L292.8,255.1 L292.8,273.7 L294.9,273.7 L294.9,264.4 L296.6,264.4 L296.6,264.4 L298.0,264.4 L298.0,273.7 L299.3,273.7 L299.3,255.1 L301.3,255.1 L301.3,273.7 L303.4,273.7 L303.4,285.0 L304.5,285.0 L304.5,273.7 L305.8,273.7 L305.8,273.7 L308.0,273.7 L308.0,285.0 L309.1,285.0 L309.1,285.0 L310.9,285.0 L310.9,285.0 L311.8,285.0 L311.8,273.7 L313.2,273.7 L313.2,285.0 L314.7,285.0 L314.7,264.4 L316.4,264.4 L316.4,264.4 L318.0,264.4 L318.0,255.1 L320.2,255.1 L320.2,285.0 L321.5,285.0 L321.5,255.1 L322.8,255.1 L322.8,264.4 L324.6,264.4 L324.6,264.4 L326.8,264.4 L326.8,255.1 L327.9,255.1 L327.9,264.4 L329.4,264.4 L329.4,273.7 L330.8,273.7 L330.8,285.0 L332.7,285.0 L332.7,273.7 L333.9,273.7 L333.9,285.0 L335.2,285.0 L335.2,285.0 L336.8,285.0 L336.8,285.0 L337.7,285.0 L337.7,285.0 L338.8,285.0 L338.8,264.4 L339.8,264.4 L339.8,273.7 L341.7,273.7 L341.7,273.7 L342.8,273.7 L342.8,255.1 L344.9,255.1 L344.9,285.0 L346.1,285.0 L346.1,273.7 L348.0,273.7 L348.0,273.7 L349.9,273.7 L349.9,285.0 L351.7,285.0 L351.7,285.0 L353.0,285.0 L353.0,264.4 L355.0,264.4 L355.0,255.1 L356.7,255.1 L356.7,273.7 L358.5,273.7 L358.5,264.4 L360.5,264.4 L360.5,264.4 L361.5,264.4 L361.5,273.7 L363.3,273.7 L363.3,285.0 L365.0,285.0 L365.0,285.0 L366.6,285.0 L366.6,285.0 L367.8,285.0 L367.8,285.0 L369.3,285.0 L369.3,285.0 L370.7,285.0 L370.7,285.0 L371.6,285.0 L371.6,285.0 L373.6,285.0 L373.6,285.0 L374.9,285.0 L374.9,285.0 L376.3,285.0 L376.3,285.0 L378.3,285.0 L378.3,264.4 L379.5,264.4 L379.5,285.0 L380.8,285.0 L380.8,285.0 L381.9,285.0 L381.9,285.0 L383.8,285.0 L383.8,285.0 L385.6,285.0 L385.6,285.0 L387.2,285.0 L387.2,285.0 L388.7,285.0 L388.7,285.0 L390.3,285.0 L390.3,285.0 L392.4,285.0 L392.4,285.0 L393.4,285.0 L393.4,285.0 L395.5,285.0 L395.5,285.0 L397.1,285.0 L397.1,285.0 L398.4,285.0 L398.4,285.0 L399.6,285.0 L399.6,285.0 L400.6,285.0 L400.6,285.0 L402.0,285.0 L402.0,285.0 L403.6,285.0 L403.6,285.0 L404.6,285.0 L404.6,285.0 L406.4,285.0 L406.4,285.0 L407.5,285.0 L407.5,264.4 L408.6,264.4 L408.6,285.0 L410.8,285.0 L410.8,285.0 L412.3,285.0 L412.3,285.0 L413.7,285.0 L413.7,285.0 L415.3,285.0 L415.3,285.0 L416.9,285.0 L416.9,285.0 L418.2,285.0 L418.2,285.0 L420.2,285.0 L420.2,273.7 L421.8,273.7 L421.8,285.0 L423.0,285.0 L423.0,285.0 L425.1,285.0 L425.1,285.0 L426.9,285.0 L426.9,285.0 L428.2,285.0 L428.2,285.0 L429.2,285.0 L429.2,273.7 L430.1,273.7 L430.1,285.0 L431.1,285.0 L431.1,285.0 L432.0,285.0 L432.0,255.1 L433.3,255.1 L433.3,285.0 L435.2,285.0 L435.2,264.4 L436.6,264.4 L436.6,285.0 L438.8,285.0 L438.8,264.4 L440.2,264.4 L440.2,285.0 L441.4,285.0 L441.4,285.0 L442.3,285.0 L442.3,285.0 L443.5,285.0 L443.5,285.0 L445.3,285.0 L445.3,255.1 L447.1,255.1 L447.1,285.0 L448.8,285.0 L448.8,273.7 L450.2,273.7 L450.2,285.0 L451.2,285.0 L451.2,285.0 L452.8,285.0 L452.8,285.0 L454.2,285.0 L454.2,285.0 L455.3,285.0 L455.3,285.0 L457.0,285.0 L457.0,285.0 L458.1,285.0 L458.1,285.0 L459.2,285.0 L459.2,285.0 L460.5,285.0 L460.5,285.0 L461.5,285.0 L461.5,285.0 L463.0,285.0 L463.0,285.0 L464.1,285.0 L464.1,285.0 L465.0,285.0 L465.0,285.0 L466.3,285.0 L466.3,285.0 L467.9,285.0 L467.9,285.0 L469.4,285.0 L469.4,285.0 L471.0,285.0 L471.0,285.0 L472.9,285.0 L472.9,285.0 L474.7,285.0 L474.7,285.0 L476.7,285.0 L476.7,285.0 L478.3,285.0 L478.3,285.0 L479.4,285.0 L479.4,285.0 L481.5,285.0 L481.5,285.0 L482.7,285.0 L482.7,285.0 L484.7,285.0 L484.7,285.0 L486.3,285.0 L486.3,285.0 L487.3,285.0 L487.3,273.7 L488.8,273.7 L488.8,273.7 L490.3,273.7 L490.3,285.0 L491.8,285.0 L491.8,285.0 L493.5,285.0 L493.5,285.0 L495.1,285.0 L495.1,285.0 L496.6,285.0 L496.6,273.7 L498.1,273.7 L498.1,285.0 L499.8,285.0 L499.8,285.0 L500.9,285.0 L500.9,273.7 L502.2,273.7 L502.2,285.0 L504.1,285.0 L504.1,285.0 L505.2,285.0 L505.2,264.4 L507.4,264.4 L507.4,285.0 L508.4,285.0 L508.4,285.0 L510.3,285.0 L510.3,264.4 L511.3,264.4 L511.3,285.0 L513.3,285.0 L513.3,285.0 L515.3,285.0 L515.3,285.0 L516.8,285.0 L516.8,285.0 L517.8,285.0 L517.8,285.0 L519.6,285.0 L519.6,285.0 L521.2,285.0 L521.2,285.0 L522.7,285.0 L522.7,285.0 L524.7,285.0 L524.7,285.0 L526.3,285.0 L526.3,285.0 L527.3,285.0 L527.3,273.7 L529.2,273.7 L529.2,264.4 L531.2,264.4 L531.2,285.0 L533.2,285.0 L533.2,285.0 L535.1,285.0 L535.1,285.0 L537.0,285.0 L537.0,285.0 L539.0,285.0 L539.0,285.0 L540.0,285.0 L540.0,285.0 L542.1,285.0 L542.1,285.0 L544.1,285.0 L544.1,285.0 L545.5,285.0 L545.5,285.0 L546.5,285.0 L546.5,273.7 L548.5,273.7 L548.5,285.0 L549.6,285.0 L549.6,285.0 L551.1,285.0 L551.1,285.0 L553.2,285.0 L553.2,285.0 L554.8,285.0 L554.8,285.0 L556.2,285.0 L556.2,285.0 L558.0,285.0 L558.0,285.0 L559.8,285.0 L559.8,285.0 L561.6,285.0 L561.6,285.0 L563.5,285.0 L563.5,285.0 L565.3,285.0 L565.3,273.7 L566.2,273.7 L566.2,285.0 L567.3,285.0 L567.3,285.0 L569.0,285.0 L569.0,285.0 L570.3,285.0 L570.3,285.0 L572.5,285.0 L572.5,285.0 L574.3,285.0 L574.3,285.0 L576.4,285.0 L576.4,285.0 L577.5,285.0 L577.5,285.0 L579.2,285.0 L579.2,285.0 L580.6,285.0 L580.6,285.0 L581.9,285.0 L581.9,285.0 L583.4,285.0 L583.4,285.0 L584.8,285.0 L584.8,285.0 L586.0,285.0 L586.0,285.0 L587.3,285.0 L587.3,285.0 L589.4,285.0 L589.4,285.0 L591.2,285.0 L591.2,273.7 L592.4,273.7 L592.4,264.4 L593.8,264.4 L593.8,285.0 L595.5,285.0 L595.5,273.7 L597.2,273.7 L597.2,285.0 L598.6,285.0 L598.6,285.0 L600.3,285.0 L600.3,285.0 L601.6,285.0 L601.6,285.0 L603.4,285.0 L603.4,285.0 L604.6,285.0 L604.6,285.0 L606.0,285.0 L606.0,285.0 L607.1,285.0 L607.1,285.0 L609.1,285.0 L609.1,285.0 L610.4,285.0 L610.4,285.0 L611.8,285.0 L611.8,285.0 L613.2,285.0 L613.2,285.0 L615.1,285.0 L615.1,285.0 L617.1,285.0 L617.1,285.0 L618.8,285.0 L618.8,285.0 L620.4,285.0 L620.4,285.0 L621.4,285.0 L621.4,285.0 L623.5,285.0 L623.5,285.0 L624.5,285.0 L624.5,285.0 L625.9,285.0 L625.9,285.0 L627.3,285.0 L627.3,285.0 L629.1,285.0 L629.1,285.0 L630.9,285.0 L630.9,285.0 L632.2,285.0 L632.2,285.0 L634.3,285.0 L634.3,285.0 L636.4,285.0 L636.4,285.0 L637.4,285.0 L637.4,285.0 L639.1,285.0 L639.1,285.0 L640.6,285.0 L640.6,285.0 L642.0,285.0 L642.0,285.0 L643.5,285.0 L643.5,285.0 L644.8,285.0 L644.8,285.0 L646.6,285.0 L646.6,285.0 L648.2,285.0 L648.2,285.0 L650.4,285.0 L650.4,285.0 L652.6,285.0 L652.6,285.0 L654.8,285.0 L654.8,285.0 L656.2,285.0 L656.2,285.0 L658.2,285.0 L658.2,285.0 L659.9,285.0 L659.9,285.0 L661.7,285.0 L661.7,285.0 L663.9,285.0 L663.9,285.0 L664.9,285.0 L664.9,285.0 L666.4,285.0 L666.4,285.0 L667.8,285.0 L667.8,285.0 L669.6,285.0 L669.6,285.0 L670.8,285.0 L670.8,285.0 L672.9,285.0 L672.9,285.0 L674.1,285.0 L674.1,285.0 L675.5,285.0 L675.5,285.0 L676.6,285.0 L676.6,285.0 L678.0,285.0 L678.0,285.0 L679.9,285.0 L679.9,285.0 L680.9,285.0 L680.9,285.0 L682.0,285.0 L682.0,285.0 L683.7,285.0 L683.7,285.0 L685.4,285.0 L685.4,285.0 L687.3,285.0 L687.3,285.0 L688.5,285.0 L688.5,285.0 L690.5,285.0 L690.5,285.0 L692.3,285.0 L692.3,285.0 L694.2,285.0 L694.2,285.0 L695.3,285.0 L695.3,285.0 L696.8,285.0 L696.8,285.0 L697.7,285.0 L697.7,285.0 L699.8,285.0 L699.8,285.0 L701.9,285.0 L701.9,285.0 L703.9,285.0 L703.9,285.0 L704.9,285.0 L704.9,285.0 L706.2,285.0 L706.2,285.0 L707.8,285.0 L707.8,285.0 L709.4,285.0 L709.4,285.0 L710.5,285.0 L710.5,285.0 L712.4,285.0 L712.4,285.0 L713.7,285.0 L713.7,285.0 L715.2,285.0 L715.2,285.0 L716.3,285.0 L716.3,285.0 L717.9,285.0 L717.9,285.0 L719.0,285.0 L719.0,285.0 L720.0,285.0 L720.0,285.0 L721.6,285.0 L721.6,285.0 L722.9,285.0 L722.9,285.0 L724.8,285.0 L724.8,285.0 L726.0,285.0 L726.0,285.0 L727.4,285.0 L727.4,285.0 L728.4,285.0 L728.4,285.0 L729.6,285.0 L729.6,285.0 L731.1,285.0 L731.1,285.0 L732.7,285.0 L732.7,285.0 L734.2,285.0 L734.2,285.0 L736.2,285.0 L736.2,285.0 L737.2,285.0 L737.2,285.0 L739.3,285.0 L739.3,285.0 L740.4,285.0 L740.4,285.0 L742.5,285.0 L742.5,285.0 L744.1,285.0 L744.1,285.0 L745.5,285.0 L745.5,285.0 L747.2,285.0 L747.2,285.0 L749.2,285.0 L749.2,285.0 L751.4,285.0 L751.4,285.0 L752.8,285.0 L752.8,285.0 L753.8,285.0 L753.8,285.0 L754.9,285.0 L754.9,285.0 L756.8,285.0 L756.8,285.0 L758.7,285.0 L758.7,285.0 L760.5,285.0 L760.5,285.0 L761.6,285.0 L761.6,285.0 L763.2,285.0 L763.2,285.0 L764.1,285.0 L764.1,285.0 L765.2,285.0 L765.2,285.0 L766.5,285.0 L766.5,285.0 L768.6,285.0 L768.6,285.0 L770.4,285.0 L770.4,285.0 L772.4,285.0 L772.4,285.0 L773.3,285.0 L773.3,285.0 L774.8,285.0 L774.8,285.0 L775.8,285.0 L775.8,285.0 L777.0,285.0 L777.0,285.0 L778.0,285.0 L778.0,285.0 L780.1,285.0 L780.1,285.0 L781.5,285.0 L781.5,285.0 L783.0,285.0 L783.0,285.0 L784.8,285.0 L784.8,285.0 L786.8,285.0 L786.8,285.0 L788.9,285.0 L788.9,285.0 L790.6,285.0 L790.6,285.0 L792.1,285.0 L792.1,285.0 L794.2,285.0 L794.2,285.0 L795.6,285.0 L795.6,285.0 L796.9,285.0 L796.9,285.0 L798.8,285.0 L798.8,285.0 L800.0,285.0 L800.0,285.0 L801.4,285.0 L801.4,285.0 L802.8,285.0 L802.8,285.0 L804.4,285.0 L804.4,285.0 L805.7,285.0 L805.7,285.0 L807.2,285.0 L807.2,285.0 L808.7,285.0 L808.7,285.0 L809.6,285.0 L809.6,285.0 L811.6,285.0 L811.6,285.0 L812.6,285.0 L812.6,285.0 L814.2,285.0 L814.2,285.0 L815.8,285.0 L815.8,285.0 L817.2,285.0 L817.2,285.0 L818.4,285.0 L818.4,285.0 L819.4,285.0 L819.4,285.0 L820.8,285.0 L820.8,285.0 L822.1,285.0 L822.1,285.0 L823.7,285.0 L823.7,285.0 L824.9,285.0 L824.9,285.0 L826.7,285.0 L826.7,285.0 L828.3,285.0 L828.3,285.0 L829.2,285.0 L829.2,285.0 L830.6,285.0 L830.6,285.0 L832.8,285.0 L832.8,285.0 L833.7,285.0 L833.7,285.0 L835.3,285.0 L835.3,285.0 L837.5,285.0 L837.5,285.0 L838.9,285.0 L838.9,285.0 L840.5,285.0 L840.5,285.0 L841.9,285.0 L841.9,285.0 L843.2,285.0 L843.2,285.0 L844.9,285.0 L844.9,285.0 L846.6,285.0 L846.6,285.0 L847.9,285.0 L847.9,285.0 L849.4,285.0 L849.4,285.0 L851.0,285.0 L851.0,285.0 L852.9,285.0 L852.9,285.0 L853.8,285.0 L853.8,285.0 L854.9,285.0 L854.9,285.0 L856.1,285.0 L856.1,285.0 L857.3,285.0 L857.3,285.0 L859.3,285.0 L859.3,285.0 L860.7,285.0 L860.7,285.0 L862.8,285.0 L862.8,285.0 L864.2,285.0 L864.2,285.0 L865.4,285.0 L865.4,285.0 L867.2,285.0 L867.2,285.0 L868.2,285.0 L868.2,285.0 L870.4,285.0 L870.4,285.0 L872.4,285.0 L872.4,285.0 L873.7,285.0 L873.7,285.0 L875.0,285.0 L875.0,285.0 L877.0,285.0 L877.0,285.0 L878.9,285.0 L878.9,285.0 L880.7,285.0 L880.7,285.0 L881.6,285.0 L881.6,285.0 L883.5,285.0 L883.5,285.0 L884.5,285.0 L884.5,285.0 L886.2,285.0 L886.2,285.0 L887.8,285.0 L887.8,285.0 L889.9,285.0 L889.9,285.0 L891.7,285.0 L891.7,285.0 L892.6,285.0 L892.6,285.0 L894.7,285.0 L894.7,285.0 L896.6,285.0 L896.6,285.0 L898.2,285.0 L898.2,285.0 L899.1,285.0 L899.1,285.0" fill="none" stroke="#109010" stroke-width="1.8" stroke-linejoin="round" shape-rendering="geometricPrecision" />
<path d="M65.0,285.0 L134.0,285.0 L142.0,276.5 L146.0,276.0 L150.0,280.0 L156.0,280.0 L160.0,283.5 L165.0,283.5 L168.0,279.5 L172.0,279.0 L175.0,285.0 L178.0,280.0 L180.0,275.7 L187.0,258.0 L194.0,246.4 L201.5,258.0 L211.0,275.7 L214.0,273.7 L220.0,249.3 L226.0,257.0 L231.0,268.0 L235.0,269.0 L248.0,262.0 L257.0,255.2 L264.0,264.0 L270.0,266.0 L277.7,247.4 L287.4,245.4 L301.0,258.0 L317.7,238.6 L324.5,252.3 L329.4,247.4 L336.3,263.0 L346.0,268.9 L353.8,281.6 L361.6,263.0 L369.5,258.0 L375.0,271.6 L380.0,280.0 L385.0,267.6 L393.0,268.6 L400.0,270.6 L405.0,281.3 L425.0,281.0 L430.0,278.0 L436.0,268.6 L442.0,269.6 L450.0,276.4 L456.0,281.3 L465.0,280.0 L472.0,282.0 L480.0,272.5 L485.0,272.0 L490.0,274.5 L500.0,278.4 L505.0,282.0 L515.0,279.0 L520.0,282.0 L550.0,281.0 L555.0,276.0 L560.0,279.0 L565.0,276.4 L570.0,276.0 L575.0,279.0 L580.0,268.6 L585.0,268.6 L588.0,278.4 L592.0,268.6 L595.0,266.7 L600.0,261.8 L604.0,270.0 L606.0,285.0 L660.0,285.0 L690.0,278.0 L698.0,276.4 L708.0,277.0 L715.0,280.0 L725.0,285.0 L850.0,285.0 L855.0,280.3 L865.0,280.3 L870.0,285.0 L901.0,285.0" fill="none" stroke="#0000ff" stroke-width="1.8" stroke-linejoin="round" shape-rendering="geometricPrecision" />
<rect x="65" y="284" width="837" height="2" fill="#1f6f45"/>
<path d="M65.0,107.5 L68.5,107.0 L72.0,105.2 L75.5,107.0 L79.0,108.5 L82.5,107.7 L86.0,106.7 L89.5,106.7 L93.0,106.7 L96.5,106.9 L100.0,107.2 L103.5,107.8 L107.0,108.0 L110.5,108.6 L114.0,109.2 L117.5,109.8 L121.0,110.4 L124.5,109.2 L128.0,109.2 L131.5,109.9 L135.0,110.5 L138.5,111.7 L142.0,109.4 L145.5,109.5 L149.0,108.4 L152.5,108.6 L156.0,108.5 L159.5,109.3 L163.0,109.4 L166.5,109.2 L170.0,110.0 L173.5,110.2 L177.0,110.5 L180.5,110.4 L184.0,109.7 L187.5,110.1 L191.0,110.0 L194.5,108.7 L198.0,107.5 L201.5,106.8 L205.0,106.0 L208.5,105.8 L212.0,106.1 L215.5,105.3 L219.0,104.4 L222.5,105.4 L226.0,104.6 L229.5,104.9 L233.0,104.1 L236.5,103.8 L240.0,103.0 L243.5,103.4 L247.0,103.2 L250.5,103.3 L254.0,103.3 L257.5,104.0 L261.0,104.1 L264.5,103.5 L268.0,103.6 L271.5,104.3 L275.0,104.3 L278.5,103.6 L282.0,103.5 L285.5,104.1 L289.0,103.4 L292.5,103.3 L296.0,103.3 L299.5,103.2 L303.0,102.3 L306.5,102.5 L310.0,102.2 L313.5,101.8 L317.0,101.5 L320.5,101.2 L324.0,101.3 L327.5,99.6 L331.0,99.7 L334.5,98.6 L338.0,98.7 L341.5,98.2 L345.0,97.8 L348.5,97.3 L352.0,96.9 L355.5,97.1 L359.0,95.5 L362.5,96.3 L366.0,95.2 L369.5,94.9 L373.0,95.2 L376.5,94.3 L380.0,94.0 L383.5,93.8 L387.0,92.9 L390.5,93.2 L394.0,92.9 L397.5,93.3 L401.0,91.9 L404.5,92.2 L408.0,92.6 L411.5,91.7 L415.0,90.9 L418.5,91.3 L422.0,91.9 L425.5,91.3 L429.0,91.9 L432.5,91.3 L436.0,91.3 L439.5,91.3 L443.0,91.3 L446.5,91.2 L450.0,91.0 L453.5,90.9 L457.0,90.1 L460.5,90.6 L464.0,90.6 L467.5,90.9 L471.0,91.2 L474.5,92.1 L478.0,92.3 L481.5,92.0 L485.0,91.7 L488.5,92.7 L492.0,93.0 L495.5,93.9 L499.0,93.6 L502.5,93.9 L506.0,94.2 L509.5,94.5 L513.0,94.1 L516.5,94.7 L520.0,95.4 L523.5,94.8 L527.0,94.2 L530.5,94.9 L534.0,94.9 L537.5,94.4 L541.0,95.0 L544.5,95.4 L548.0,94.6 L551.5,94.4 L555.0,94.2 L558.5,94.0 L562.0,94.4 L565.5,93.5 L569.0,93.1 L572.5,92.8 L576.0,91.9 L579.5,92.2 L583.0,91.2 L586.5,91.5 L590.0,91.2 L593.5,91.4 L597.0,90.5 L600.5,89.9 L604.0,89.3 L607.5,89.3 L611.0,88.2 L614.5,88.5 L618.0,87.1 L621.5,88.1 L625.0,87.3 L628.5,87.8 L632.0,87.6 L635.5,86.8 L639.0,86.6 L642.5,85.8 L646.0,86.3 L649.5,85.9 L653.0,86.1 L656.5,85.1 L660.0,84.7 L663.5,84.2 L667.0,83.8 L670.5,83.4 L674.0,83.0 L677.5,83.5 L681.0,82.7 L684.5,83.2 L688.0,82.4 L691.5,82.3 L695.0,81.6 L698.5,82.6 L702.0,81.3 L705.5,82.4 L709.0,81.0 L712.5,81.5 L716.0,80.8 L719.5,80.7 L723.0,81.8 L726.5,80.5 L730.0,81.0 L733.5,80.9 L737.0,80.8 L740.5,80.7 L744.0,80.6 L747.5,79.9 L751.0,79.8 L754.5,80.3 L758.0,79.7 L761.5,80.2 L765.0,80.7 L768.5,80.0 L772.0,80.2 L775.5,79.8 L779.0,78.3 L782.5,78.5 L786.0,78.9 L789.5,78.3 L793.0,77.6 L796.5,78.8 L800.0,78.2 L803.5,78.7 L807.0,78.1 L810.5,78.1 L814.0,77.4 L817.5,78.0 L821.0,78.0 L824.5,78.1 L828.0,78.2 L831.5,77.6 L835.0,78.3 L838.5,77.7 L842.0,79.0 L845.5,79.0 L849.0,77.9 L852.5,78.5 L856.0,78.6 L859.5,78.6 L863.0,78.6 L866.5,78.7 L870.0,78.7 L873.5,78.7 L877.0,79.4 L880.5,78.8 L884.0,78.8 L887.5,78.3 L891.0,79.5 L894.5,78.9 L898.0,79.6" fill="none" stroke="#ee22ee" stroke-width="2" stroke-linejoin="round" shape-rendering="geometricPrecision" />
<rect x="902" y="13" width="1" height="273" fill="#c8c8c8" opacity="0.8"/>
<rect x="74" y="306" width="836" height="88" fill="url(#g2)"/>
<rect x="74" y="306" width="2" height="88" fill="#d2d2d2"/>
<line x1="74" y1="370.5" x2="910" y2="370.5" stroke="#c8c8c8" stroke-width="1" stroke-dasharray="1 1" opacity="0.45"/>
<line x1="74" y1="350.0" x2="910" y2="350.0" stroke="#c8c8c8" stroke-width="1" stroke-dasharray="1 1" opacity="0.45"/>
<line x1="74" y1="329.5" x2="910" y2="329.5" stroke="#c8c8c8" stroke-width="1" stroke-dasharray="1 1" opacity="0.45"/>
<rect x="76" y="391" width="834" height="2" fill="#c4c4c4"/>
<rect x="76" y="393" width="834" height="1" fill="#000"/>
<rect x="70" y="390.0" width="4" height="2" fill="#ff4040"/>
<text x="65" y="393.0" fill="#ff0000" font-size="8" text-anchor="end" clip-path="url(#cmid)">0</text>
<rect x="72" y="384.9" width="2" height="2" fill="#ff4040"/>
<rect x="72" y="379.8" width="2" height="2" fill="#ff4040"/>
<rect x="72" y="374.6" width="2" height="2" fill="#ff4040"/>
<rect x="70" y="369.5" width="4" height="2" fill="#ff4040"/>
<text x="65" y="372.5" fill="#ff0000" font-size="8" text-anchor="end" clip-path="url(#cmid)">90</text>
<rect x="72" y="364.4" width="2" height="2" fill="#ff4040"/>
<rect x="72" y="359.2" width="2" height="2" fill="#ff4040"/>
<rect x="72" y="354.1" width="2" height="2" fill="#ff4040"/>
<rect x="70" y="349.0" width="4" height="2" fill="#ff4040"/>
<text x="65" y="352.0" fill="#ff0000" font-size="8" text-anchor="end" clip-path="url(#cmid)">180</text>
<rect x="72" y="343.9" width="2" height="2" fill="#ff4040"/>
<rect x="72" y="338.8" width="2" height="2" fill="#ff4040"/>
<rect x="72" y="333.6" width="2" height="2" fill="#ff4040"/>
<rect x="70" y="328.5" width="4" height="2" fill="#ff4040"/>
<text x="65" y="331.5" fill="#ff0000" font-size="8" text-anchor="end" clip-path="url(#cmid)">270</text>
<rect x="72" y="323.4" width="2" height="2" fill="#ff4040"/>
<rect x="72" y="318.2" width="2" height="2" fill="#ff4040"/>
<rect x="72" y="313.1" width="2" height="2" fill="#ff4040"/>
<rect x="70" y="308.0" width="4" height="2" fill="#ff4040"/>
<text x="65" y="311.0" fill="#ff0000" font-size="8" text-anchor="end" clip-path="url(#cmid)">360</text>
<text x="939" y="311.5" fill="#ff0000" font-size="14" text-anchor="start" >N</text>
<text x="939" y="332.2" fill="#ff0000" font-size="14" text-anchor="start" >W</text>
<text x="939" y="352.9" fill="#ff0000" font-size="14" text-anchor="start" >S</text>
<text x="939" y="373.6" fill="#ff0000" font-size="14" text-anchor="start" >O</text>
<text x="939" y="394.3" fill="#ff0000" font-size="14" text-anchor="start" >N</text>
<path d="M75.0,377.0 L77.0,377.0 L79.0,377.0 L81.0,377.0 L83.0,378.4 L85.0,379.9 L87.0,372.0 L89.0,364.0 L91.0,363.9 L93.0,363.8 L95.0,363.7 L97.0,363.7 L99.0,363.6 L101.0,363.5 L103.0,363.4 L105.0,360.4 L107.0,357.4 L109.0,357.4 L111.0,357.4 L113.0,357.4 L115.0,357.4 L117.0,357.4 L119.0,357.4 L121.0,357.4 L123.0,357.4 L125.0,357.4 L127.0,357.4 L129.0,357.4 L131.0,357.4 L133.0,357.4 L135.0,357.4 L137.0,357.4 L139.0,357.4 L141.0,358.1 L143.0,358.8 L145.0,358.9 L147.0,358.9 L149.0,359.0 L151.0,359.3 L153.0,360.0 L155.0,381.5 L155.6,381.5 L155.6,381.5 L156.2,321.2 L155.0,381.5 L157.0,320.2 L159.0,319.2 L161.0,319.2 L163.0,319.2 L165.0,319.2 L167.0,319.2 L169.0,319.2 L171.0,319.2 L173.0,319.2 L175.0,335.1 L177.0,333.2 L179.0,327.3 L181.0,320.1 L183.0,317.6 L184.3,321.1 L185.6,328.5 L186.9,326.8 L188.2,320.2 L189.5,318.6 L190.8,317.0 L192.1,316.7 L193.4,317.1 L194.7,316.0 L196.0,316.5 L197.3,312.7 L198.6,314.0 L199.9,315.4 L201.2,313.8 L202.5,314.4 L203.8,310.8 L205.1,311.9 L206.4,316.0 L207.7,326.8 L209.0,321.1 L210.3,314.6 L211.6,319.5 L212.9,308.9 L214.2,312.0 L215.5,312.0 L216.8,310.2 L218.1,313.6 L219.4,312.0 L219.5,313.6 L220.1,390.0 L224.0,390.0 L224.6,314.0 L220.7,314.8 L222.0,311.6 L223.3,310.8 L224.2,314.0 L224.8,390.0 L224.8,390.0 L225.4,314.0 L224.6,316.4 L225.8,314.0 L226.4,390.0 L226.4,390.0 L227.0,314.0 L225.9,312.1 L227.2,312.2 L228.5,317.1 L229.7,314.0 L230.3,386.0 L230.3,386.0 L230.9,314.0 L229.8,316.4 L231.1,312.7 L232.4,317.0 L233.7,314.3 L235.0,315.1 L235.6,314.0 L236.2,388.0 L236.2,388.0 L236.8,314.0 L236.3,312.1 L237.6,316.8 L238.9,315.2 L240.2,317.0 L241.5,316.6 L242.8,312.8 L243.8,314.1 L244.3,383.0 L244.3,383.0 L244.9,314.1 L244.1,313.2 L245.4,312.0 L246.7,311.9 L246.9,314.2 L247.5,390.0 L247.5,390.0 L248.1,314.2 L248.0,311.4 L249.3,313.0 L250.6,314.9 L251.9,311.1 L253.2,315.5 L254.5,313.3 L255.8,313.2 L257.1,316.5 L258.4,314.3 L259.7,313.3 L261.0,314.4 L262.3,315.8 L263.6,311.7 L264.9,317.5 L266.2,311.4 L267.5,316.1 L268.0,314.5 L268.6,377.0 L268.6,377.0 L269.2,314.5 L268.8,316.7 L270.1,311.4 L271.4,316.3 L272.7,313.6 L274.0,315.0 L275.3,311.4 L276.2,314.5 L276.9,390.0 L276.9,390.0 L277.4,314.5 L276.6,311.6 L277.9,312.5 L279.2,317.4 L280.5,312.6 L281.8,316.1 L283.1,317.2 L284.4,317.3 L285.7,313.5 L287.0,313.6 L288.3,314.7 L289.6,316.3 L290.9,312.0 L292.2,316.0 L293.5,316.3 L294.8,316.7 L296.1,311.4 L297.4,317.2 L298.7,311.7 L300.0,313.2 L301.3,314.9 L302.6,316.9 L303.9,313.1 L305.2,316.8 L306.5,314.4 L307.8,312.9 L309.1,312.9 L310.4,311.9 L311.7,311.3 L313.0,311.8 L314.3,315.2 L315.6,317.2 L316.9,311.8 L318.0,314.0 L318.6,388.0 L318.6,388.0 L319.2,314.0 L318.2,311.1 L319.5,317.1 L320.8,314.2 L322.1,313.4 L323.4,312.3 L324.7,314.6 L326.0,316.1 L327.3,313.7 L328.6,313.5 L329.9,311.2 L331.2,316.5 L332.5,310.8 L333.8,313.6 L335.1,315.7 L336.4,311.0 L337.7,314.7 L339.0,313.1 L339.6,388.0 L339.6,388.0 L340.2,313.0 L339.0,316.0 L340.3,313.8 L341.6,314.9 L342.5,313.1 L343.1,390.0 L346.6,390.0 L347.2,313.2 L342.9,310.6 L344.2,312.7 L345.5,310.9 L346.8,315.4 L348.1,311.9 L349.4,313.0 L350.7,318.1 L352.0,320.3 L353.3,317.6 L354.6,310.8 L355.9,309.9 L357.2,311.5 L358.5,309.9 L359.8,308.7 L361.1,309.4 L362.4,307.7 L363.7,309.2 L365.0,313.1 L366.3,316.0 L367.6,316.9 L368.9,314.3 L370.2,310.1 L371.5,309.6 L372.8,311.8 L374.1,316.1 L375.4,316.5 L376.6,311.4 L377.2,390.0 L379.5,390.0 L380.1,313.2 L376.7,310.3 L378.0,313.2 L379.3,314.2 L380.6,314.8 L381.9,315.8 L383.2,316.9 L384.5,314.9 L385.8,322.0 L387.1,320.5 L388.4,321.9 L389.7,320.4 L391.0,313.7 L392.3,310.5 L393.6,314.1 L394.9,311.5 L396.2,310.6 L397.5,307.5 L397.7,310.7 L398.3,360.0 L398.3,360.0 L398.9,311.2 L398.8,311.5 L400.1,310.1 L401.4,313.3 L402.7,312.3 L404.0,315.0 L405.0,313.9 L405.6,390.0 L405.6,390.0 L406.2,314.9 L405.3,315.1 L406.6,317.2 L407.9,314.9 L409.2,317.1 L410.5,318.0 L411.8,318.9 L413.1,315.6 L414.4,318.3 L415.7,318.1 L417.0,316.5 L418.3,317.6 L419.6,315.7 L420.9,311.2 L422.2,311.1 L423.5,308.8 L424.8,313.1 L426.1,313.8 L427.4,310.8 L428.7,313.0 L430.0,314.7 L431.3,316.3 L432.6,313.6 L433.9,317.8 L435.2,316.9 L436.5,317.7 L437.8,316.4 L439.1,315.0 L440.4,314.4 L441.7,315.4 L443.0,313.1 L443.6,390.0 L443.6,390.0 L444.2,310.9 L443.0,314.5 L444.3,307.7 L445.6,308.3 L446.9,312.6 L448.2,316.2 L449.5,315.1 L450.8,319.7 L452.1,317.5 L453.4,311.3 L454.7,311.6 L456.0,307.6 L457.3,306.7 L457.8,309.7 L458.4,379.0 L458.4,379.0 L459.0,309.9 L458.6,307.4 L459.9,308.8 L461.2,307.8 L461.7,309.7 L462.3,384.4 L462.3,384.4 L462.9,309.5 L462.5,307.6 L463.8,306.4 L464.0,309.3 L464.6,346.9 L464.6,346.9 L465.2,309.1 L465.1,308.9 L466.4,308.9 L467.7,312.5 L468.0,312.3 L468.6,389.0 L468.6,389.0 L469.2,314.3 L469.0,314.5 L470.3,315.0 L471.6,315.9 L472.9,321.5 L474.2,318.6 L475.5,310.9 L476.8,311.9 L478.1,312.1 L479.4,314.3 L480.7,311.3 L482.0,308.8 L483.3,309.9 L484.6,308.9 L485.9,309.8 L487.2,309.4 L488.5,309.9 L489.8,311.2 L491.1,311.9 L492.4,312.1 L493.7,313.9 L495.0,320.1 L496.3,324.7 L497.6,324.3 L498.9,325.2 L500.2,325.1 L501.5,325.9 L502.8,324.8 L504.1,322.9 L505.4,321.6 L506.7,322.5 L508.0,320.5 L509.3,320.6 L510.6,321.3 L511.9,321.3 L513.2,320.1 L514.5,321.0 L515.8,321.3 L517.1,320.1 L518.4,320.1 L519.7,319.5 L521.0,314.6 L522.3,310.9 L523.6,309.8 L524.9,310.9 L526.2,310.8 L527.5,318.8 L528.8,326.8 L530.1,328.1 L531.4,327.0 L532.7,321.2 L534.0,317.8 L535.3,318.0 L536.6,315.9 L537.9,314.4 L539.2,313.6 L540.5,312.2 L541.8,313.2 L543.1,312.9 L544.4,312.6 L545.7,313.6 L547.0,313.7 L548.3,314.6 L549.6,317.1 L550.9,316.5 L552.2,317.9 L553.5,317.6 L554.8,316.5 L556.1,316.4 L557.4,314.2 L558.7,314.9 L560.0,313.4 L561.3,314.0 L562.6,313.6 L563.9,313.8 L565.2,313.7 L566.5,313.8 L567.8,312.5 L569.1,313.7 L570.4,312.6 L571.7,313.5 L573.0,314.3 L573.6,388.0 L576.6,388.0 L577.2,316.9 L573.0,314.0 L574.3,314.8 L575.6,316.1 L576.9,316.9 L578.2,316.3 L579.5,316.6 L580.8,315.8 L582.1,314.2 L583.4,314.2 L584.7,314.1 L586.0,314.6 L587.3,314.0 L588.6,319.1 L589.9,321.9 L591.2,323.2 L592.5,322.4 L593.8,322.5 L595.1,322.5 L596.4,320.3 L597.7,315.6 L599.0,313.8 L600.3,311.1 L602.3,311.5 L604.3,311.9 L606.3,312.0 L608.3,312.0 L610.3,312.1 L612.3,312.1 L614.3,312.1 L616.3,312.1 L618.3,312.2 L620.3,312.2 L622.3,312.2 L624.3,312.2 L626.3,312.3 L628.3,312.3 L630.3,312.3 L632.3,312.3 L634.3,312.4 L636.3,312.4 L638.3,312.4 L640.3,312.4 L642.3,312.5 L644.3,312.5 L646.3,311.2 L648.3,308.3 L650.3,308.3 L652.3,308.3 L654.3,308.3 L656.3,308.3 L658.3,308.3 L660.3,308.3 L662.3,308.3 L664.3,308.3 L666.3,308.6 L668.3,309.1 L670.3,309.6 L672.3,310.1 L674.3,310.8 L676.3,311.0 L678.3,311.0 L680.3,311.0 L682.3,311.0 L684.3,311.0 L686.3,311.0 L688.3,311.0 L690.3,311.5 L692.3,315.1 L694.3,315.8 L696.3,314.1 L698.3,309.8 L700.3,313.8 L702.3,310.2 L704.3,309.0 L706.3,309.0 L708.3,309.0 L710.3,309.0 L712.3,309.0 L714.3,309.3 L716.3,311.1 L718.3,311.6 L720.3,312.0 L722.3,312.2 L724.3,312.4 L726.3,312.5 L728.3,312.7 L730.3,312.8 L732.3,313.0 L734.3,313.2 L736.3,313.3 L738.3,313.4 L740.3,313.4 L742.3,313.4 L744.3,313.4 L746.3,313.4 L748.3,313.4 L750.3,313.4 L752.3,313.4 L754.3,313.4 L756.3,313.4 L758.3,313.4 L760.3,313.4 L762.3,313.4 L764.3,313.4 L766.3,313.4 L768.3,313.4 L770.3,313.4 L772.3,313.7 L774.3,314.3 L776.3,314.3 L778.3,314.3 L780.3,314.3 L782.3,314.3 L784.3,314.3 L786.3,314.3 L788.3,314.3 L790.3,314.3 L792.3,314.3 L794.3,314.3 L796.3,314.3 L798.3,314.3 L800.3,314.3 L802.3,314.3 L804.3,314.3 L806.3,314.3 L808.3,314.3 L810.3,314.3 L812.3,314.3 L814.3,314.3 L816.3,314.3 L818.3,314.3 L820.3,314.3 L822.3,314.3 L824.3,314.3 L826.3,314.3 L828.3,314.3 L830.3,314.3 L832.3,314.3 L834.3,314.3 L836.3,314.3 L838.3,314.3 L840.3,314.3 L842.3,314.3 L844.3,314.3 L846.3,314.3 L848.3,314.3 L850.3,314.3 L852.3,314.3 L854.3,314.3 L856.3,313.6 L858.3,309.8 L860.3,309.8 L862.3,309.9 L864.3,309.9 L866.3,309.9 L868.3,309.9 L870.3,310.0 L872.3,309.9 L874.3,309.2 L876.3,309.6 L878.3,310.6 L880.3,311.5 L882.3,311.7 L884.3,311.9 L886.3,312.0 L888.3,312.0 L890.3,312.0 L892.3,312.0 L894.3,312.0 L896.3,312.0 L898.3,312.0 L900.3,312.0 L902.3,312.0 L904.3,312.0 L906.3,312.0 L908.3,312.0" fill="none" stroke="#ee1c1c" stroke-width="1.6" stroke-linejoin="round" shape-rendering="geometricPrecision" />
<rect x="78" y="426" width="827" height="242" fill="url(#g3)"/>
<rect x="78" y="426" width="2" height="242" fill="#d2d2d2"/>
<rect x="905" y="426" width="2" height="243" fill="#d2d2d2"/>
<rect x="78" y="668" width="829" height="1" fill="#c8c8c8" opacity="0.8"/>
<line x1="78" y1="655.6" x2="905" y2="655.6" stroke="#c8c8c8" stroke-width="1" stroke-dasharray="1 1" opacity="0.45"/>
<line x1="78" y1="643.8" x2="905" y2="643.8" stroke="#c8c8c8" stroke-width="1" stroke-dasharray="1 1" opacity="0.45"/>
<line x1="78" y1="632.0" x2="905" y2="632.0" stroke="#c8c8c8" stroke-width="1" stroke-dasharray="1 1" opacity="0.45"/>
<line x1="78" y1="620.1" x2="905" y2="620.1" stroke="#c8c8c8" stroke-width="1" stroke-dasharray="1 1" opacity="0.45"/>
<line x1="78" y1="608.2" x2="905" y2="608.2" stroke="#c8c8c8" stroke-width="1" stroke-dasharray="1 1" opacity="0.45"/>
<line x1="78" y1="596.4" x2="905" y2="596.4" stroke="#c8c8c8" stroke-width="1" stroke-dasharray="1 1" opacity="0.45"/>
<line x1="78" y1="584.5" x2="905" y2="584.5" stroke="#c8c8c8" stroke-width="1" stroke-dasharray="1 1" opacity="0.45"/>
<line x1="78" y1="572.7" x2="905" y2="572.7" stroke="#c8c8c8" stroke-width="1" stroke-dasharray="1 1" opacity="0.45"/>
<line x1="78" y1="560.9" x2="905" y2="560.9" stroke="#c8c8c8" stroke-width="1" stroke-dasharray="1 1" opacity="0.45"/>
<line x1="78" y1="549.0" x2="905" y2="549.0" stroke="#c8c8c8" stroke-width="1" stroke-dasharray="1 1" opacity="0.45"/>
<line x1="78" y1="537.1" x2="905" y2="537.1" stroke="#c8c8c8" stroke-width="1" stroke-dasharray="1 1" opacity="0.45"/>
<line x1="78" y1="525.3" x2="905" y2="525.3" stroke="#c8c8c8" stroke-width="1" stroke-dasharray="1 1" opacity="0.45"/>
<line x1="78" y1="513.5" x2="905" y2="513.5" stroke="#c8c8c8" stroke-width="1" stroke-dasharray="1 1" opacity="0.45"/>
<line x1="78" y1="501.6" x2="905" y2="501.6" stroke="#c8c8c8" stroke-width="1" stroke-dasharray="1 1" opacity="0.45"/>
<line x1="78" y1="489.8" x2="905" y2="489.8" stroke="#c8c8c8" stroke-width="1" stroke-dasharray="1 1" opacity="0.45"/>
<line x1="78" y1="477.9" x2="905" y2="477.9" stroke="#c8c8c8" stroke-width="1" stroke-dasharray="1 1" opacity="0.45"/>
<line x1="78" y1="466.0" x2="905" y2="466.0" stroke="#c8c8c8" stroke-width="1" stroke-dasharray="1 1" opacity="0.45"/>
<line x1="78" y1="454.2" x2="905" y2="454.2" stroke="#c8c8c8" stroke-width="1" stroke-dasharray="1 1" opacity="0.45"/>
<line x1="78" y1="442.4" x2="905" y2="442.4" stroke="#c8c8c8" stroke-width="1" stroke-dasharray="1 1" opacity="0.45"/>
<line x1="146.1" y1="426" x2="146.1" y2="668" stroke="#c8c8c8" stroke-width="1" stroke-dasharray="1 1" opacity="0.45"/>
<line x1="214.5" y1="426" x2="214.5" y2="668" stroke="#c8c8c8" stroke-width="1" stroke-dasharray="1 1" opacity="0.45"/>
<line x1="283.0" y1="426" x2="283.0" y2="668" stroke="#c8c8c8" stroke-width="1" stroke-dasharray="1 1" opacity="0.45"/>
<line x1="351.4" y1="426" x2="351.4" y2="668" stroke="#c8c8c8" stroke-width="1" stroke-dasharray="1 1" opacity="0.45"/>
<line x1="419.8" y1="426" x2="419.8" y2="668" stroke="#c8c8c8" stroke-width="1" stroke-dasharray="1 1" opacity="0.45"/>
<line x1="488.2" y1="426" x2="488.2" y2="668" stroke="#c8c8c8" stroke-width="1" stroke-dasharray="1 1" opacity="0.45"/>
<line x1="556.6" y1="426" x2="556.6" y2="668" stroke="#c8c8c8" stroke-width="1" stroke-dasharray="1 1" opacity="0.45"/>
<line x1="625.1" y1="426" x2="625.1" y2="668" stroke="#c8c8c8" stroke-width="1" stroke-dasharray="1 1" opacity="0.45"/>
<line x1="693.5" y1="426" x2="693.5" y2="668" stroke="#c8c8c8" stroke-width="1" stroke-dasharray="1 1" opacity="0.45"/>
<line x1="761.9" y1="426" x2="761.9" y2="668" stroke="#c8c8c8" stroke-width="1" stroke-dasharray="1 1" opacity="0.45"/>
<line x1="830.3" y1="426" x2="830.3" y2="668" stroke="#c8c8c8" stroke-width="1" stroke-dasharray="1 1" opacity="0.45"/>
<rect x="33" y="426" width="2" height="243" fill="#0000ff"/>
<rect x="29" y="665.0" width="4" height="2" fill="#6060ff"/>
<text x="25.5" y="668.0" fill="#0000ff" font-size="8" text-anchor="end" clip-path="url(#cbot)">0</text>
<rect x="31" y="662.3" width="2" height="1.5" fill="#6060ff"/>
<rect x="31" y="659.3" width="2" height="1.5" fill="#6060ff"/>
<rect x="31" y="656.4" width="2" height="1.5" fill="#6060ff"/>
<rect x="29" y="653.1" width="4" height="2" fill="#6060ff"/>
<text x="25.5" y="656.1" fill="#0000ff" font-size="8" text-anchor="end" clip-path="url(#cbot)">5</text>
<rect x="31" y="650.4" width="2" height="1.5" fill="#6060ff"/>
<rect x="31" y="647.5" width="2" height="1.5" fill="#6060ff"/>
<rect x="31" y="644.5" width="2" height="1.5" fill="#6060ff"/>
<rect x="29" y="641.3" width="4" height="2" fill="#6060ff"/>
<text x="25.5" y="644.3" fill="#0000ff" font-size="8" text-anchor="end" clip-path="url(#cbot)">10</text>
<rect x="31" y="638.6" width="2" height="1.5" fill="#6060ff"/>
<rect x="31" y="635.6" width="2" height="1.5" fill="#6060ff"/>
<rect x="31" y="632.7" width="2" height="1.5" fill="#6060ff"/>
<rect x="29" y="629.5" width="4" height="2" fill="#6060ff"/>
<text x="25.5" y="632.5" fill="#0000ff" font-size="8" text-anchor="end" clip-path="url(#cbot)">15</text>
<rect x="31" y="626.7" width="2" height="1.5" fill="#6060ff"/>
<rect x="31" y="623.8" width="2" height="1.5" fill="#6060ff"/>
<rect x="31" y="620.8" width="2" height="1.5" fill="#6060ff"/>
<rect x="29" y="617.6" width="4" height="2" fill="#6060ff"/>
<text x="25.5" y="620.6" fill="#0000ff" font-size="8" text-anchor="end" clip-path="url(#cbot)">20</text>
<rect x="31" y="614.9" width="2" height="1.5" fill="#6060ff"/>
<rect x="31" y="611.9" width="2" height="1.5" fill="#6060ff"/>
<rect x="31" y="609.0" width="2" height="1.5" fill="#6060ff"/>
<rect x="29" y="605.8" width="4" height="2" fill="#6060ff"/>
<text x="25.5" y="608.8" fill="#0000ff" font-size="8" text-anchor="end" clip-path="url(#cbot)">25</text>
<rect x="31" y="603.0" width="2" height="1.5" fill="#6060ff"/>
<rect x="31" y="600.1" width="2" height="1.5" fill="#6060ff"/>
<rect x="31" y="597.1" width="2" height="1.5" fill="#6060ff"/>
<rect x="29" y="593.9" width="4" height="2" fill="#6060ff"/>
<text x="25.5" y="596.9" fill="#0000ff" font-size="8" text-anchor="end" clip-path="url(#cbot)">30</text>
<rect x="31" y="591.2" width="2" height="1.5" fill="#6060ff"/>
<rect x="31" y="588.2" width="2" height="1.5" fill="#6060ff"/>
<rect x="31" y="585.3" width="2" height="1.5" fill="#6060ff"/>
<rect x="29" y="582.0" width="4" height="2" fill="#6060ff"/>
<text x="25.5" y="585.0" fill="#0000ff" font-size="8" text-anchor="end" clip-path="url(#cbot)">35</text>
<rect x="31" y="579.3" width="2" height="1.5" fill="#6060ff"/>
<rect x="31" y="576.4" width="2" height="1.5" fill="#6060ff"/>
<rect x="31" y="573.4" width="2" height="1.5" fill="#6060ff"/>
<rect x="29" y="570.2" width="4" height="2" fill="#6060ff"/>
<text x="25.5" y="573.2" fill="#0000ff" font-size="8" text-anchor="end" clip-path="url(#cbot)">40</text>
<rect x="31" y="567.5" width="2" height="1.5" fill="#6060ff"/>
<rect x="31" y="564.5" width="2" height="1.5" fill="#6060ff"/>
<rect x="31" y="561.6" width="2" height="1.5" fill="#6060ff"/>
<rect x="29" y="558.4" width="4" height="2" fill="#6060ff"/>
<text x="25.5" y="561.4" fill="#0000ff" font-size="8" text-anchor="end" clip-path="url(#cbot)">45</text>
<rect x="31" y="555.6" width="2" height="1.5" fill="#6060ff"/>
<rect x="31" y="552.7" width="2" height="1.5" fill="#6060ff"/>
<rect x="31" y="549.7" width="2" height="1.5" fill="#6060ff"/>
<rect x="29" y="546.5" width="4" height="2" fill="#6060ff"/>
<text x="25.5" y="549.5" fill="#0000ff" font-size="8" text-anchor="end" clip-path="url(#cbot)">50</text>
<rect x="31" y="543.8" width="2" height="1.5" fill="#6060ff"/>
<rect x="31" y="540.8" width="2" height="1.5" fill="#6060ff"/>
<rect x="31" y="537.9" width="2" height="1.5" fill="#6060ff"/>
<rect x="29" y="534.6" width="4" height="2" fill="#6060ff"/>
<text x="25.5" y="537.6" fill="#0000ff" font-size="8" text-anchor="end" clip-path="url(#cbot)">55</text>
<rect x="31" y="531.9" width="2" height="1.5" fill="#6060ff"/>
<rect x="31" y="529.0" width="2" height="1.5" fill="#6060ff"/>
<rect x="31" y="526.0" width="2" height="1.5" fill="#6060ff"/>
<rect x="29" y="522.8" width="4" height="2" fill="#6060ff"/>
<text x="25.5" y="525.8" fill="#0000ff" font-size="8" text-anchor="end" clip-path="url(#cbot)">60</text>
<rect x="31" y="520.1" width="2" height="1.5" fill="#6060ff"/>
<rect x="31" y="517.1" width="2" height="1.5" fill="#6060ff"/>
<rect x="31" y="514.2" width="2" height="1.5" fill="#6060ff"/>
<rect x="29" y="510.9" width="4" height="2" fill="#6060ff"/>
<text x="25.5" y="514.0" fill="#0000ff" font-size="8" text-anchor="end" clip-path="url(#cbot)">65</text>
<rect x="31" y="508.2" width="2" height="1.5" fill="#6060ff"/>
<rect x="31" y="505.3" width="2" height="1.5" fill="#6060ff"/>
<rect x="31" y="502.3" width="2" height="1.5" fill="#6060ff"/>
<rect x="29" y="499.1" width="4" height="2" fill="#6060ff"/>
<text x="25.5" y="502.1" fill="#0000ff" font-size="8" text-anchor="end" clip-path="url(#cbot)">70</text>
<rect x="31" y="496.4" width="2" height="1.5" fill="#6060ff"/>
<rect x="31" y="493.4" width="2" height="1.5" fill="#6060ff"/>
<rect x="31" y="490.5" width="2" height="1.5" fill="#6060ff"/>
<rect x="29" y="487.2" width="4" height="2" fill="#6060ff"/>
<text x="25.5" y="490.2" fill="#0000ff" font-size="8" text-anchor="end" clip-path="url(#cbot)">75</text>
<rect x="31" y="484.5" width="2" height="1.5" fill="#6060ff"/>
<rect x="31" y="481.6" width="2" height="1.5" fill="#6060ff"/>
<rect x="31" y="478.6" width="2" height="1.5" fill="#6060ff"/>
<rect x="29" y="475.4" width="4" height="2" fill="#6060ff"/>
<text x="25.5" y="478.4" fill="#0000ff" font-size="8" text-anchor="end" clip-path="url(#cbot)">80</text>
<rect x="31" y="472.7" width="2" height="1.5" fill="#6060ff"/>
<rect x="31" y="469.7" width="2" height="1.5" fill="#6060ff"/>
<rect x="31" y="466.8" width="2" height="1.5" fill="#6060ff"/>
<rect x="29" y="463.5" width="4" height="2" fill="#6060ff"/>
<text x="25.5" y="466.5" fill="#0000ff" font-size="8" text-anchor="end" clip-path="url(#cbot)">85</text>
<rect x="31" y="460.8" width="2" height="1.5" fill="#6060ff"/>
<rect x="31" y="457.9" width="2" height="1.5" fill="#6060ff"/>
<rect x="31" y="454.9" width="2" height="1.5" fill="#6060ff"/>
<rect x="29" y="451.7" width="4" height="2" fill="#6060ff"/>
<text x="25.5" y="454.7" fill="#0000ff" font-size="8" text-anchor="end" clip-path="url(#cbot)">90</text>
<rect x="31" y="449.0" width="2" height="1.5" fill="#6060ff"/>
<rect x="31" y="446.0" width="2" height="1.5" fill="#6060ff"/>
<rect x="31" y="443.1" width="2" height="1.5" fill="#6060ff"/>
<rect x="29" y="439.9" width="4" height="2" fill="#6060ff"/>
<text x="25.5" y="442.9" fill="#0000ff" font-size="8" text-anchor="end" clip-path="url(#cbot)">95</text>
<rect x="31" y="437.1" width="2" height="1.5" fill="#6060ff"/>
<rect x="31" y="434.2" width="2" height="1.5" fill="#6060ff"/>
<rect x="31" y="431.2" width="2" height="1.5" fill="#6060ff"/>
<rect x="29" y="428.0" width="4" height="2" fill="#6060ff"/>
<text x="25.5" y="431.0" fill="#0000ff" font-size="8" text-anchor="end" clip-path="url(#cbot)">100</text>
<rect x="74" y="665.0" width="4" height="2" fill="#ff4040"/>
<text x="70.5" y="668.0" fill="#ff0000" font-size="8" text-anchor="end" clip-path="url(#cbot)">0</text>
<rect x="76" y="655.1" width="2" height="2" fill="#ff4040"/>
<rect x="76" y="645.2" width="2" height="2" fill="#ff4040"/>
<rect x="76" y="635.4" width="2" height="2" fill="#ff4040"/>
<rect x="74" y="625.5" width="4" height="2" fill="#ff4040"/>
<text x="70.5" y="628.5" fill="#ff0000" font-size="8" text-anchor="end" clip-path="url(#cbot)">5</text>
<rect x="76" y="615.6" width="2" height="2" fill="#ff4040"/>
<rect x="76" y="605.8" width="2" height="2" fill="#ff4040"/>
<rect x="76" y="595.9" width="2" height="2" fill="#ff4040"/>
<rect x="74" y="586.0" width="4" height="2" fill="#ff4040"/>
<text x="70.5" y="589.0" fill="#ff0000" font-size="8" text-anchor="end" clip-path="url(#cbot)">10</text>
<rect x="76" y="576.1" width="2" height="2" fill="#ff4040"/>
<rect x="76" y="566.2" width="2" height="2" fill="#ff4040"/>
<rect x="76" y="556.4" width="2" height="2" fill="#ff4040"/>
<rect x="74" y="546.5" width="4" height="2" fill="#ff4040"/>
<text x="70.5" y="549.5" fill="#ff0000" font-size="8" text-anchor="end" clip-path="url(#cbot)">15</text>
<rect x="76" y="536.6" width="2" height="2" fill="#ff4040"/>
<rect x="76" y="526.8" width="2" height="2" fill="#ff4040"/>
<rect x="76" y="516.9" width="2" height="2" fill="#ff4040"/>
<rect x="74" y="507.0" width="4" height="2" fill="#ff4040"/>
<text x="70.5" y="510.0" fill="#ff0000" font-size="8" text-anchor="end" clip-path="url(#cbot)">20</text>
<rect x="76" y="497.1" width="2" height="2" fill="#ff4040"/>
<rect x="76" y="487.2" width="2" height="2" fill="#ff4040"/>
<rect x="76" y="477.4" width="2" height="2" fill="#ff4040"/>
<rect x="74" y="467.5" width="4" height="2" fill="#ff4040"/>
<text x="70.5" y="470.5" fill="#ff0000" font-size="8" text-anchor="end" clip-path="url(#cbot)">25</text>
<rect x="76" y="457.6" width="2" height="2" fill="#ff4040"/>
<rect x="76" y="447.8" width="2" height="2" fill="#ff4040"/>
<rect x="76" y="437.9" width="2" height="2" fill="#ff4040"/>
<rect x="74" y="428.0" width="4" height="2" fill="#ff4040"/>
<text x="70.5" y="431.0" fill="#ff0000" font-size="8" text-anchor="end" clip-path="url(#cbot)">30</text>
<rect x="906" y="665.0" width="4" height="2" fill="#40a040"/>
<text x="912.5" y="668.0" fill="#008000" font-size="8" text-anchor="start" clip-path="url(#cbot)">-15</text>
<rect x="906" y="659.6" width="2" height="2" fill="#40a040"/>
<rect x="906" y="654.2" width="2" height="2" fill="#40a040"/>
<rect x="906" y="648.8" width="2" height="2" fill="#40a040"/>
<rect x="906" y="643.5" width="4" height="2" fill="#40a040"/>
<text x="912.5" y="646.5" fill="#008000" font-size="8" text-anchor="start" clip-path="url(#cbot)">-10</text>
<rect x="906" y="638.1" width="2" height="2" fill="#40a040"/>
<rect x="906" y="632.7" width="2" height="2" fill="#40a040"/>
<rect x="906" y="627.3" width="2" height="2" fill="#40a040"/>
<rect x="906" y="621.9" width="4" height="2" fill="#40a040"/>
<text x="912.5" y="624.9" fill="#008000" font-size="8" text-anchor="start" clip-path="url(#cbot)">-5</text>
<rect x="906" y="616.5" width="2" height="2" fill="#40a040"/>
<rect x="906" y="611.1" width="2" height="2" fill="#40a040"/>
<rect x="906" y="605.8" width="2" height="2" fill="#40a040"/>
<rect x="906" y="600.4" width="4" height="2" fill="#40a040"/>
<text x="912.5" y="603.4" fill="#008000" font-size="8" text-anchor="start" clip-path="url(#cbot)">0</text>
<rect x="906" y="595.0" width="2" height="2" fill="#40a040"/>
<rect x="906" y="589.6" width="2" height="2" fill="#40a040"/>
<rect x="906" y="584.2" width="2" height="2" fill="#40a040"/>
<rect x="906" y="578.8" width="4" height="2" fill="#40a040"/>
<text x="912.5" y="581.8" fill="#008000" font-size="8" text-anchor="start" clip-path="url(#cbot)">5</text>
<rect x="906" y="573.4" width="2" height="2" fill="#40a040"/>
<rect x="906" y="568.0" width="2" height="2" fill="#40a040"/>
<rect x="906" y="562.7" width="2" height="2" fill="#40a040"/>
<rect x="906" y="557.3" width="4" height="2" fill="#40a040"/>
<text x="912.5" y="560.3" fill="#008000" font-size="8" text-anchor="start" clip-path="url(#cbot)">10</text>
<rect x="906" y="551.9" width="2" height="2" fill="#40a040"/>
<rect x="906" y="546.5" width="2" height="2" fill="#40a040"/>
<rect x="906" y="541.1" width="2" height="2" fill="#40a040"/>
<rect x="906" y="535.7" width="4" height="2" fill="#40a040"/>
<text x="912.5" y="538.7" fill="#008000" font-size="8" text-anchor="start" clip-path="url(#cbot)">15</text>
<rect x="906" y="530.3" width="2" height="2" fill="#40a040"/>
<rect x="906" y="525.0" width="2" height="2" fill="#40a040"/>
<rect x="906" y="519.6" width="2" height="2" fill="#40a040"/>
<rect x="906" y="514.2" width="4" height="2" fill="#40a040"/>
<text x="912.5" y="517.2" fill="#008000" font-size="8" text-anchor="start" clip-path="url(#cbot)">20</text>
<rect x="906" y="508.8" width="2" height="2" fill="#40a040"/>
<rect x="906" y="503.4" width="2" height="2" fill="#40a040"/>
<rect x="906" y="498.0" width="2" height="2" fill="#40a040"/>
<rect x="906" y="492.6" width="4" height="2" fill="#40a040"/>
<text x="912.5" y="495.6" fill="#008000" font-size="8" text-anchor="start" clip-path="url(#cbot)">25</text>
<rect x="906" y="487.3" width="2" height="2" fill="#40a040"/>
<rect x="906" y="481.9" width="2" height="2" fill="#40a040"/>
<rect x="906" y="476.5" width="2" height="2" fill="#40a040"/>
<rect x="906" y="471.1" width="4" height="2" fill="#40a040"/>
<text x="912.5" y="474.1" fill="#008000" font-size="8" text-anchor="start" clip-path="url(#cbot)">30</text>
<rect x="906" y="465.7" width="2" height="2" fill="#40a040"/>
<rect x="906" y="460.3" width="2" height="2" fill="#40a040"/>
<rect x="906" y="454.9" width="2" height="2" fill="#40a040"/>
<rect x="906" y="449.5" width="4" height="2" fill="#40a040"/>
<text x="912.5" y="452.5" fill="#008000" font-size="8" text-anchor="start" clip-path="url(#cbot)">35</text>
<rect x="906" y="444.2" width="2" height="2" fill="#40a040"/>
<rect x="906" y="438.8" width="2" height="2" fill="#40a040"/>
<rect x="906" y="433.4" width="2" height="2" fill="#40a040"/>
<rect x="906" y="428.0" width="4" height="2" fill="#40a040"/>
<text x="912.5" y="431.0" fill="#008000" font-size="8" text-anchor="start" clip-path="url(#cbot)">40</text>
<rect x="94.3" y="669" width="1" height="3" fill="#a0a0a0"/>
<rect x="111.4" y="669" width="1" height="3" fill="#a0a0a0"/>
<rect x="128.5" y="669" width="1" height="3" fill="#a0a0a0"/>
<rect x="145.6" y="669" width="1" height="5" fill="#a0a0a0"/>
<rect x="162.7" y="669" width="1" height="3" fill="#a0a0a0"/>
<rect x="179.8" y="669" width="1" height="3" fill="#a0a0a0"/>
<rect x="196.9" y="669" width="1" height="3" fill="#a0a0a0"/>
<rect x="214.0" y="669" width="1" height="5" fill="#a0a0a0"/>
<rect x="231.1" y="669" width="1" height="3" fill="#a0a0a0"/>
<rect x="248.2" y="669" width="1" height="3" fill="#a0a0a0"/>
<rect x="265.4" y="669" width="1" height="3" fill="#a0a0a0"/>
<rect x="282.5" y="669" width="1" height="5" fill="#a0a0a0"/>
<rect x="299.6" y="669" width="1" height="3" fill="#a0a0a0"/>
<rect x="316.7" y="669" width="1" height="3" fill="#a0a0a0"/>
<rect x="333.8" y="669" width="1" height="3" fill="#a0a0a0"/>
<rect x="350.9" y="669" width="1" height="5" fill="#a0a0a0"/>
<rect x="368.0" y="669" width="1" height="3" fill="#a0a0a0"/>
<rect x="385.1" y="669" width="1" height="3" fill="#a0a0a0"/>
<rect x="402.2" y="669" width="1" height="3" fill="#a0a0a0"/>
<rect x="419.3" y="669" width="1" height="5" fill="#a0a0a0"/>
<rect x="436.4" y="669" width="1" height="3" fill="#a0a0a0"/>
<rect x="453.5" y="669" width="1" height="3" fill="#a0a0a0"/>
<rect x="470.6" y="669" width="1" height="3" fill="#a0a0a0"/>
<rect x="487.7" y="669" width="1" height="5" fill="#a0a0a0"/>
<rect x="504.8" y="669" width="1" height="3" fill="#a0a0a0"/>
<rect x="521.9" y="669" width="1" height="3" fill="#a0a0a0"/>
<rect x="539.0" y="669" width="1" height="3" fill="#a0a0a0"/>
<rect x="556.1" y="669" width="1" height="5" fill="#a0a0a0"/>
<rect x="573.2" y="669" width="1" height="3" fill="#a0a0a0"/>
<rect x="590.4" y="669" width="1" height="3" fill="#a0a0a0"/>
<rect x="607.5" y="669" width="1" height="3" fill="#a0a0a0"/>
<rect x="624.6" y="669" width="1" height="5" fill="#a0a0a0"/>
<rect x="641.7" y="669" width="1" height="3" fill="#a0a0a0"/>
<rect x="658.8" y="669" width="1" height="3" fill="#a0a0a0"/>
<rect x="675.9" y="669" width="1" height="3" fill="#a0a0a0"/>
<rect x="693.0" y="669" width="1" height="5" fill="#a0a0a0"/>
<rect x="710.1" y="669" width="1" height="3" fill="#a0a0a0"/>
<rect x="727.2" y="669" width="1" height="3" fill="#a0a0a0"/>
<rect x="744.3" y="669" width="1" height="3" fill="#a0a0a0"/>
<rect x="761.4" y="669" width="1" height="5" fill="#a0a0a0"/>
<rect x="778.5" y="669" width="1" height="3" fill="#a0a0a0"/>
<rect x="795.6" y="669" width="1" height="3" fill="#a0a0a0"/>
<rect x="812.7" y="669" width="1" height="3" fill="#a0a0a0"/>
<rect x="829.8" y="669" width="1" height="5" fill="#a0a0a0"/>
<rect x="846.9" y="669" width="1" height="3" fill="#a0a0a0"/>
<rect x="864.0" y="669" width="1" height="3" fill="#a0a0a0"/>
<rect x="881.1" y="669" width="1" height="3" fill="#a0a0a0"/>
<rect x="898.2" y="669" width="1" height="5" fill="#a0a0a0"/>
<text x="146.1" y="683" fill="#0000ff" font-size="8" text-anchor="middle" >02</text>
<text x="214.5" y="683" fill="#0000ff" font-size="8" text-anchor="middle" >04</text>
<text x="283.0" y="683" fill="#0000ff" font-size="8" text-anchor="middle" >06</text>
<text x="351.4" y="683" fill="#0000ff" font-size="8" text-anchor="middle" >08</text>
<text x="419.8" y="683" fill="#0000ff" font-size="8" text-anchor="middle" >10</text>
<text x="488.2" y="683" fill="#0000ff" font-size="8" text-anchor="middle" >12</text>
<text x="556.6" y="683" fill="#0000ff" font-size="8" text-anchor="middle" >14</text>
<text x="625.1" y="683" fill="#0000ff" font-size="8" text-anchor="middle" >16</text>
<text x="693.5" y="683" fill="#0000ff" font-size="8" text-anchor="middle" >18</text>
<text x="761.9" y="683" fill="#0000ff" font-size="8" text-anchor="middle" >20</text>
<text x="830.3" y="683" fill="#0000ff" font-size="8" text-anchor="middle" >22</text>
<text x="898.7" y="683" fill="#0000ff" font-size="8" text-anchor="middle" >00</text>
<text x="720" y="683" fill="#0000ff" font-size="8" text-anchor="middle" >Sun Set</text>
<path d="M80.0,666.0 L526.0,666.0 L527.0,664.0 L547.0,664.0 L548.0,662.5 L898.0,662.5 L899.0,666.0 L903.0,666.0" fill="none" stroke="#ff0000" stroke-width="3" stroke-linejoin="round" shape-rendering="geometricPrecision" />
<path d="M80.0,618.2 L108.0,618.0 L112.0,616.9 L119.0,615.5 L146.0,615.5 L150.0,617.0 L157.0,619.6 L165.0,622.9 L183.0,622.5 L187.0,621.8 L200.0,621.8 L214.5,623.7 L231.0,625.6 L266.0,627.8 L283.0,629.2 L316.0,630.0 L396.0,630.0 L400.0,628.9 L430.0,628.5 L440.0,627.8 L459.0,626.4 L480.0,625.0 L484.0,623.7 L492.0,621.8 L510.0,620.5 L514.0,619.6 L522.0,616.3 L530.0,613.6 L535.0,615.0 L536.0,612.8 L542.0,614.0 L555.0,615.0 L574.0,615.0 L590.0,618.2 L604.0,621.0 L621.0,624.5 L625.0,625.0 L642.0,627.0 L661.0,628.4 L681.0,630.3 L700.0,631.2 L720.0,631.2 L730.0,630.5 L760.0,630.5 L778.0,631.7 L806.0,632.6 L850.0,634.0 L862.0,635.4 L903.0,635.5" fill="none" stroke="#107010" stroke-width="2" stroke-linejoin="round" shape-rendering="geometricPrecision" />
<path d="M80.0,632.7 L95.5,632.7 L97.0,634.6 L107.0,634.6 L108.0,632.7 L118.0,632.7 L120.0,631.1 L124.0,631.1 L128.0,630.5 L146.0,630.5 L150.0,631.5 L160.0,633.3 L168.0,632.0 L171.0,631.5 L171.3,629.2 L172.0,631.5 L180.0,631.0 L184.0,630.0 L193.0,629.2 L209.0,630.5 L223.0,631.9 L250.0,634.1 L266.0,636.0 L288.0,636.6 L321.0,637.4 L350.0,636.8 L389.0,636.8 L390.0,635.5 L428.0,635.5 L429.0,634.6 L450.0,634.0 L457.0,633.8 L483.0,631.9 L488.0,630.0 L495.0,630.5 L509.0,630.5 L514.0,627.3 L520.0,627.0 L525.0,624.5 L530.0,625.0 L532.0,627.3 L535.0,623.5 L537.0,627.0 L540.0,625.0 L547.0,627.3 L566.0,626.0 L577.0,626.0 L585.0,629.2 L592.0,628.5 L594.7,624.0 L596.0,629.0 L606.0,632.7 L619.0,635.5 L625.0,636.2 L646.0,636.7 L650.0,638.7 L668.0,638.7 L672.0,640.1 L680.0,639.0 L683.0,640.0 L689.0,638.7 L710.0,640.0 L760.0,639.5 L764.0,637.3 L780.0,638.0 L786.0,639.5 L805.0,640.4 L810.0,642.0 L860.0,642.0 L862.0,642.3 L903.0,642.3" fill="none" stroke="#cc22cc" stroke-width="2" stroke-linejoin="round" shape-rendering="geometricPrecision" />
<path d="M80.0,478.9 L95.0,479.0 L97.0,480.5 L107.0,480.5 L108.0,478.0 L112.0,478.0 L113.0,480.5 L120.0,480.5 L123.0,478.0 L125.0,478.0 L125.6,475.0 L126.2,478.0 L128.0,478.0 L128.3,475.0 L128.9,478.0 L132.0,478.0 L132.4,475.0 L133.0,478.0 L137.5,478.0 L137.9,475.0 L138.5,478.0 L140.0,478.0 L143.0,476.6 L148.0,475.0 L152.0,472.0 L157.0,468.5 L160.0,466.0 L164.0,462.0 L168.0,459.0 L170.0,457.0 L171.0,446.3 L172.0,456.4 L175.0,457.0 L178.0,455.0 L185.0,454.0 L187.0,452.3 L200.0,452.3 L202.0,450.2 L216.0,450.2 L217.0,448.2 L225.0,448.2 L227.0,450.0 L229.0,450.0 L232.0,448.0 L267.0,448.0 L269.0,450.0 L272.0,448.0 L470.0,449.7 L473.0,449.7 L475.0,452.4 L487.0,452.4 L488.0,449.7 L490.0,452.4 L495.0,452.4 L497.0,456.5 L510.6,457.0 L513.0,454.7 L518.0,454.7 L519.9,457.6 L521.1,461.1 L522.9,462.9 L524.0,460.0 L526.0,460.0 L531.0,462.9 L532.2,468.1 L534.0,461.7 L535.2,468.0 L538.1,462.3 L540.0,464.0 L544.0,468.7 L548.0,467.5 L550.4,466.5 L553.0,467.5 L556.9,468.7 L559.2,465.8 L569.2,465.8 L571.5,462.9 L576.2,466.4 L580.9,464.6 L586.8,468.7 L590.3,465.8 L593.8,464.6 L595.0,450.0 L596.0,464.6 L600.8,464.6 L602.6,462.3 L606.7,464.6 L609.0,461.7 L628.0,461.4 L629.0,460.0 L649.0,460.0 L651.0,462.3 L672.0,462.3 L673.0,458.7 L686.0,458.7 L688.0,455.2 L707.0,455.2 L708.0,438.2 L709.0,455.2 L718.0,455.2 L720.0,453.2 L740.0,453.0 L741.0,450.0 L766.0,450.0 L767.0,447.8 L903.0,447.8" fill="none" stroke="#1a2ae0" stroke-width="2" stroke-linejoin="round" shape-rendering="geometricPrecision" />
<line x1="307" y1="645" x2="307" y2="670" stroke="#f0f000" stroke-width="2" stroke-dasharray="1 1" shape-rendering="crispEdges"/>
<line x1="722" y1="645" x2="722" y2="670" stroke="#f0f000" stroke-width="2" stroke-dasharray="1 1" shape-rendering="crispEdges"/>
<rect x="705" y="634" width="33" height="11" fill="#141414"/><text x="721" y="643.5" fill="#f0f028" font-size="9.5" text-anchor="middle">Sun Set</text>
</svg></body></html>
